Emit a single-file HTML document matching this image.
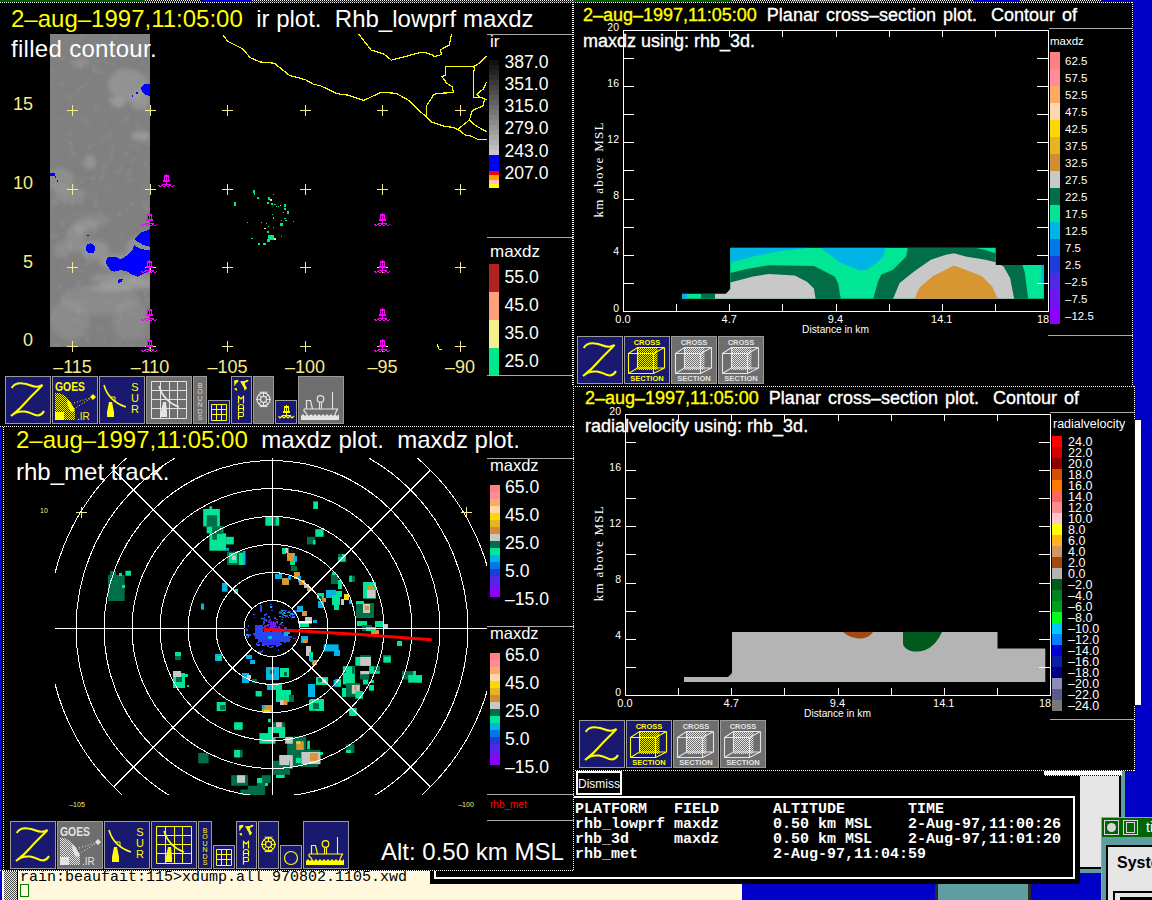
<!DOCTYPE html>
<html><head><meta charset="utf-8"><style>
html,body{margin:0;padding:0;background:#000;overflow:hidden;width:1152px;height:900px}
svg{display:block} text{white-space:pre}
</style></head><body>
<svg width="1152" height="900" viewBox="0 0 1152 900" shape-rendering="crispEdges">
<rect x="0" y="0" width="1152" height="900" fill="#000" />
<rect x="1133" y="0" width="19" height="386" fill="#0000c8" />
<rect x="1134" y="386" width="18" height="400" fill="#0000c8" />
<rect x="0" y="0" width="145" height="2" fill="#006400" />
<rect x="201" y="0" width="51" height="2" fill="#0000e0" />
<rect x="573" y="0" width="159" height="2" fill="#006400" />
<rect x="792" y="0" width="90" height="2" fill="#006400" />
<rect x="974" y="0" width="46" height="2" fill="#0000e0" />
<rect x="1101" y="0" width="51" height="2" fill="#0000c8" />
<line x1="145" y1="0.5" x2="201" y2="0.5" stroke="#fff" stroke-width="1" stroke-dasharray="1 1"/>
<line x1="146" y1="1.5" x2="201" y2="1.5" stroke="#888" stroke-width="1" stroke-dasharray="1 1"/>
<line x1="252" y1="0.5" x2="573" y2="0.5" stroke="#fff" stroke-width="1" stroke-dasharray="1 1"/>
<line x1="253" y1="1.5" x2="573" y2="1.5" stroke="#888" stroke-width="1" stroke-dasharray="1 1"/>
<line x1="732" y1="0.5" x2="974" y2="0.5" stroke="#fff" stroke-width="1" stroke-dasharray="1 1"/>
<line x1="733" y1="1.5" x2="974" y2="1.5" stroke="#888" stroke-width="1" stroke-dasharray="1 1"/>
<line x1="1020" y1="0.5" x2="1101" y2="0.5" stroke="#fff" stroke-width="1" stroke-dasharray="1 1"/>
<line x1="1021" y1="1.5" x2="1101" y2="1.5" stroke="#888" stroke-width="1" stroke-dasharray="1 1"/>
<rect x="1080" y="771" width="72" height="129" fill="#0000c8" />
<rect x="742" y="884" width="410" height="16" fill="#0000c8" />
<rect x="935" y="884" width="3" height="16" fill="#2a2a2a" />
<rect x="938" y="884" width="90" height="16" fill="#5f9ea0" />
<rect x="1028" y="884" width="3" height="16" fill="#2a2a2a" />
<rect x="1080" y="775" width="39" height="92" fill="#e6e6e6" />
<rect x="1119" y="771" width="2" height="98" fill="#000" />
<rect x="1121" y="771" width="4" height="46" fill="#5f9ea0" />
<rect x="1080" y="867" width="41" height="2" fill="#000" />
<rect x="1080" y="869" width="22" height="4" fill="#5f9ea0" />
<rect x="1101" y="817" width="51" height="83" fill="#a0a0a0" />
<rect x="1102" y="818" width="50" height="19" fill="#006400" />
<rect x="1104.5" y="820.5" width="14" height="14" fill="none" stroke="#d8d8d8" stroke-width="1"/>
<circle cx="1111.5" cy="827.5" r="4.5" fill="#d8d8d8" shape-rendering="auto"/>
<rect x="1123.5" y="820.5" width="14" height="14" fill="none" stroke="#d8d8d8" stroke-width="1"/>
<rect x="1126" y="822" width="8" height="10" fill="none" stroke="#d8d8d8" stroke-width="1"/>
<text x="1146" y="832" font-family="Liberation Sans" font-size="14" fill="#ffffff" text-anchor="start" >ti</text>
<rect x="1102" y="837" width="50" height="63" fill="#5f9ea0" />
<rect x="1106" y="845" width="46" height="55" fill="#000" />
<rect x="1108" y="847" width="44" height="53" fill="#e6e6e6" />
<text x="1117" y="868" font-family="Liberation Sans" font-size="16" fill="#000" text-anchor="start" font-weight="bold">Syste</text>
<rect x="1113" y="891" width="39" height="9" fill="#000" />
<rect x="1115" y="893" width="37" height="7" fill="#e6e6e6" />
<rect x="1120" y="897" width="32" height="3" fill="#000" />
<rect x="0" y="871" width="430" height="29" fill="#fff8dc" />
<rect x="430" y="884" width="312" height="16" fill="#fff8dc" />
<defs><pattern id="chkterm" width="2" height="2" patternUnits="userSpaceOnUse"><rect width="2" height="2" fill="#f0f0f0"/><rect width="1" height="1" fill="#404040"/><rect x="1" y="1" width="1" height="1" fill="#404040"/></pattern></defs>
<rect x="4" y="871" width="13" height="29" fill="url(#chkterm)" />
<rect x="17" y="871" width="1" height="29" fill="#000" />
<rect x="0" y="871" width="2" height="29" fill="#0000e0" />
<line x1="2.5" y1="871" x2="2.5" y2="900" stroke="#fff" stroke-width="1" stroke-dasharray="1 1"/>
<text x="20" y="880.5" font-family="Liberation Mono" font-size="15" fill="#000">rain:beaufait:115&gt;xdump.all 970802.1105.xwd</text>
<rect x="20.5" y="884.5" width="8" height="12" fill="none" stroke="#008000" stroke-width="1"/>
<rect x="430" y="771" width="650" height="113" fill="#000" />
<line x1="573.5" y1="771" x2="573.5" y2="871" stroke="#fff" stroke-width="1" stroke-dasharray="1 1"/>
<rect x="577" y="772" width="44" height="22" fill="none" stroke="#fff" stroke-width="2"/>
<text x="599" y="788" font-family="Liberation Sans" font-size="12" fill="#fff" text-anchor="middle" >Dismiss</text>
<rect x="435" y="797" width="639" height="81" fill="none" stroke="#fff" stroke-width="2"/>
<text x="575" y="812.5" font-family="Liberation Mono" font-size="15" font-weight="bold" fill="#fff">PLATFORM   FIELD      ALTITUDE       TIME</text>
<text x="575" y="827.6" font-family="Liberation Mono" font-size="15" font-weight="bold" fill="#fff">rhb_lowprf maxdz      0.50 km MSL    2-Aug-97,11:00:26</text>
<text x="575" y="842.7" font-family="Liberation Mono" font-size="15" font-weight="bold" fill="#fff">rhb_3d     maxdz      0.50 km MSL    2-Aug-97,11:01:20</text>
<text x="575" y="857.8" font-family="Liberation Mono" font-size="15" font-weight="bold" fill="#fff">rhb_met               2-Aug-97,11:04:59</text>
<rect x="1044" y="771" width="78" height="5" fill="#ffffff" />
<line x1="1044" y1="775.5" x2="1122" y2="775.5" stroke="#000" stroke-width="1" stroke-dasharray="1 1"/>
<line x1="0" y1="2.5" x2="573" y2="2.5" stroke="#fff" stroke-width="1" stroke-dasharray="1 1"/>
<line x1="573.5" y1="2" x2="573.5" y2="427" stroke="#fff" stroke-width="1" stroke-dasharray="1 1"/>
<line x1="0" y1="426.5" x2="573" y2="426.5" stroke="#fff" stroke-width="1" stroke-dasharray="1 1"/>
<rect x="50" y="34" width="100" height="313" fill="#808080" />
<defs><filter id="blur2" x="-20%" y="-20%" width="140%" height="140%"><feGaussianBlur stdDeviation="2.2"/></filter><filter id="noise" x="0" y="0" width="100%" height="100%"><feTurbulence type="fractalNoise" baseFrequency="0.12" numOctaves="3" seed="7"/><feColorMatrix type="matrix" values="0 0 0 0 1  0 0 0 0 1  0 0 0 0 1  2.2 0 0 0 -1.25"/></filter><clipPath id="satclip"><rect x="50" y="34" width="100" height="313"/></clipPath></defs>
<g clip-path="url(#satclip)" shape-rendering="auto">
<rect x="50" y="34" width="100" height="313" filter="url(#noise)" opacity="0.12"/>
<g filter="url(#blur2)" fill="#a8a8a8">
<ellipse cx="128" cy="85" rx="20" ry="16" opacity="0.45"/>
<ellipse cx="140" cy="100" rx="10" ry="10" opacity="0.5"/>
<ellipse cx="118" cy="102" rx="8" ry="5" opacity="0.6"/>
<ellipse cx="141" cy="136" rx="10" ry="5" opacity="0.6"/>
<ellipse cx="90" cy="162" rx="6" ry="7" opacity="0.5"/>
<ellipse cx="60" cy="180" rx="14" ry="12" opacity="0.35"/>
<ellipse cx="70" cy="195" rx="16" ry="8" opacity="0.3"/>
<ellipse cx="140" cy="250" rx="14" ry="14" opacity="0.45"/>
<ellipse cx="120" cy="262" rx="20" ry="8" opacity="0.5"/>
<ellipse cx="115" cy="278" rx="25" ry="5" opacity="0.45"/>
<ellipse cx="75" cy="240" rx="10" ry="12" opacity="0.35"/>
<ellipse cx="100" cy="300" rx="40" ry="15" opacity="0.25"/>
<ellipse cx="70" cy="320" rx="20" ry="20" opacity="0.25"/>
<ellipse cx="130" cy="320" rx="18" ry="20" opacity="0.2"/>
<ellipse cx="80" cy="62" rx="10" ry="5" opacity="0.3"/>
<ellipse cx="95" cy="220" rx="15" ry="6" opacity="0.25"/>
<ellipse cx="62" cy="250" rx="8" ry="8" opacity="0.3"/>
<ellipse cx="95" cy="250" rx="14" ry="10" opacity="0.45"/>
<ellipse cx="128" cy="285" rx="28" ry="5" opacity="0.5"/>
<ellipse cx="110" cy="288" rx="22" ry="4" opacity="0.4"/>
<ellipse cx="85" cy="226" rx="14" ry="6" opacity="0.4"/>
<ellipse cx="140" cy="280" rx="12" ry="6" opacity="0.5"/>
<ellipse cx="80" cy="230" rx="6" ry="5" opacity="0.4"/>
</g></g>
<polygon points="141.0,88.0 144.0,84.0 150.0,84.0 150.0,96.0 146.0,95.0 142.0,92.0" fill="#0000ff" stroke="none" stroke-width="1.2" />
<rect x="136" y="92" width="2" height="2" fill="#0000ff" />
<rect x="132" y="95" width="1" height="2" fill="#0000ff" />
<rect x="50" y="173" width="5" height="3" fill="#0000ff" />
<rect x="55" y="176" width="1" height="2" fill="#0000ff" />
<rect x="57" y="180" width="1" height="2" fill="#0000ff" />
<polygon points="85.5,248.0 87.5,244.0 91.0,243.3 94.0,245.0 95.5,249.0 94.0,252.5 88.0,252.5 86.0,251.0" fill="#0000ff" stroke="none" stroke-width="1.2" />
<polygon points="134.7,238.3 141.3,232.5 150.0,229.2 150.0,246.7 143.0,245.0 136.3,240.8" fill="#0000ff" stroke="none" stroke-width="1.2" />
<polygon points="105.5,261.7 108.0,257.5 114.7,256.7 121.3,259.2 126.3,255.8 133.0,250.0 133.8,245.0 138.8,248.3 146.3,250.0 150.0,250.0 150.0,270.0 144.7,273.3 138.0,276.7 131.3,274.2 128.0,271.7 121.3,270.0 114.7,271.7 111.3,270.8 108.0,266.7" fill="#0000ff" stroke="none" stroke-width="1.2" />
<polygon points="117.5,281.0 120.0,278.5 123.0,278.5 122.0,282.0 118.0,283.0" fill="#0000ff" stroke="none" stroke-width="1.2" />
<rect x="87" y="234.5" width="2" height="1.5" fill="#0000ff" />
<g clip-path="url(#mapclip)">
<polyline points="222.6,34.5 227.6,41.3 242.7,48.9 250.3,57.7 260.4,62.0 274.2,63.2 289.3,75.3 305.7,79.8 313.2,84.1 320.8,85.9 337.1,93.7 347.2,95.0 363.6,100.5 381.2,92.2 396.3,93.4 408.9,100.5 419.0,110.6 426.5,116.9 431.5,121.9 444.1,126.2 453.0,127.4 459.2,130.2 465.5,135.2 471.1,136.1 477.8,139.4 487.0,139.4" fill="none" stroke="#ff0" stroke-width="1.2" />
<polyline points="358.5,33.8 371.1,50.1 383.7,53.9 391.3,60.2 421.5,52.2 425.6,52.8 432.2,55.0 433.9,56.7 440.0,55.0 441.7,53.9 440.0,50.0 449.2,45.1 451.7,33.8" fill="none" stroke="#ff0" stroke-width="1.2" />
<polyline points="426.1,116.7 426.7,105.6 433.9,94.4 439.4,93.3 448.9,92.8 453.3,92.2 452.2,86.7 446.7,83.3 442.2,76.7 445.6,75.0 445.6,66.4 473.9,66.4 474.4,70.0 473.6,71.1 473.6,97.8 481.7,97.8 485.0,99.4 487.0,99.4" fill="none" stroke="#ff0" stroke-width="1.2" />
<polyline points="473.9,66.4 480.0,62.8 486.7,56.1" fill="none" stroke="#ff0" stroke-width="1.2" />
<polyline points="486.7,81.7 483.3,88.9 476.7,94.4 478.9,96.7 484.4,98.9" fill="none" stroke="#ff0" stroke-width="1.2" />
<polyline points="484.4,98.9 483.3,105.6 472.2,110.6 469.4,120.0 458.3,128.9" fill="none" stroke="#ff0" stroke-width="1.2" />
<polyline points="469.4,120.0 475.6,125.6 486.7,131.7" fill="none" stroke="#ff0" stroke-width="1.2" />
</g>
<defs><clipPath id="mapclip"><rect x="0" y="34" width="487" height="320"/></clipPath></defs>
<polyline points="437.0,344.0 439.0,349.0 442.0,350.0" fill="none" stroke="#ffff00" stroke-width="1" />
<rect x="252.5" y="190" width="2" height="3" fill="#00e88c" />
<rect x="253.5" y="192" width="1" height="3" fill="#00e88c" />
<rect x="233.5" y="201.5" width="2" height="4" fill="#00e88c" />
<rect x="257" y="197" width="2" height="2" fill="#00e88c" />
<rect x="268" y="197" width="2" height="3" fill="#00e88c" />
<rect x="269.5" y="199" width="2" height="2" fill="#f0e68c" />
<rect x="272.5" y="194" width="1" height="1" fill="#00e88c" />
<rect x="267" y="202" width="2" height="2" fill="#00e88c" />
<rect x="271" y="203" width="2" height="2" fill="#00e88c" />
<rect x="273.5" y="204" width="2" height="1" fill="#00e88c" />
<rect x="276" y="206" width="1" height="1" fill="#00e88c" />
<rect x="278" y="206" width="1" height="1" fill="#00e88c" />
<rect x="280" y="205" width="1" height="1" fill="#f0e68c" />
<rect x="284" y="203.5" width="2" height="3" fill="#00e88c" />
<rect x="283.5" y="208" width="2" height="2" fill="#00e88c" />
<rect x="286.5" y="211" width="2" height="3" fill="#00e88c" />
<rect x="283" y="212" width="1" height="1" fill="#00e88c" />
<rect x="272" y="213.5" width="1" height="1" fill="#00e88c" />
<rect x="273" y="216.5" width="1" height="2" fill="#00e88c" />
<rect x="283.5" y="218" width="2" height="1" fill="#00e88c" />
<rect x="285" y="220" width="2" height="1" fill="#00e88c" />
<rect x="281" y="220" width="1" height="1" fill="#00e88c" />
<rect x="292.5" y="221" width="1" height="1" fill="#00e88c" />
<rect x="246.5" y="221.5" width="1" height="1" fill="#00e88c" />
<rect x="261" y="222" width="1" height="1" fill="#00e88c" />
<rect x="266" y="223" width="1" height="1" fill="#00e88c" />
<rect x="279.5" y="223" width="3" height="3" fill="#00e88c" />
<rect x="268" y="226" width="1" height="1" fill="#00e88c" />
<rect x="273" y="227" width="1" height="1" fill="#00e88c" />
<rect x="264" y="228" width="2" height="1" fill="#f0e68c" />
<rect x="266.5" y="231" width="2" height="2" fill="#00e88c" />
<rect x="268" y="235" width="6" height="5" fill="#00e88c" />
<rect x="266.5" y="238.5" width="3" height="3" fill="#00e88c" />
<rect x="273.5" y="237.5" width="2" height="2" fill="#f0e68c" />
<rect x="251" y="238" width="2" height="1" fill="#00e88c" />
<rect x="281" y="236" width="1" height="1" fill="#00e88c" />
<rect x="258" y="242.5" width="2" height="2" fill="#00e88c" />
<rect x="262.5" y="243" width="3" height="2" fill="#00e88c" />
<line x1="67.0" y1="110.5" x2="78.0" y2="110.5" stroke="#f5eb8c" stroke-width="1" />
<line x1="72.5" y1="105.0" x2="72.5" y2="116.0" stroke="#f5eb8c" stroke-width="1" />
<line x1="67.0" y1="189" x2="78.0" y2="189" stroke="#f5eb8c" stroke-width="1" />
<line x1="72.5" y1="183.5" x2="72.5" y2="194.5" stroke="#f5eb8c" stroke-width="1" />
<line x1="67.0" y1="267.5" x2="78.0" y2="267.5" stroke="#f5eb8c" stroke-width="1" />
<line x1="72.5" y1="262.0" x2="72.5" y2="273.0" stroke="#f5eb8c" stroke-width="1" />
<line x1="67.0" y1="346.5" x2="78.0" y2="346.5" stroke="#f5eb8c" stroke-width="1" />
<line x1="72.5" y1="341.0" x2="72.5" y2="352.0" stroke="#f5eb8c" stroke-width="1" />
<line x1="144.5" y1="110.5" x2="155.5" y2="110.5" stroke="#f5eb8c" stroke-width="1" />
<line x1="150" y1="105.0" x2="150" y2="116.0" stroke="#f5eb8c" stroke-width="1" />
<line x1="144.5" y1="189" x2="155.5" y2="189" stroke="#f5eb8c" stroke-width="1" />
<line x1="150" y1="183.5" x2="150" y2="194.5" stroke="#f5eb8c" stroke-width="1" />
<line x1="144.5" y1="267.5" x2="155.5" y2="267.5" stroke="#f5eb8c" stroke-width="1" />
<line x1="150" y1="262.0" x2="150" y2="273.0" stroke="#f5eb8c" stroke-width="1" />
<line x1="144.5" y1="346.5" x2="155.5" y2="346.5" stroke="#f5eb8c" stroke-width="1" />
<line x1="150" y1="341.0" x2="150" y2="352.0" stroke="#f5eb8c" stroke-width="1" />
<line x1="222.0" y1="110.5" x2="233.0" y2="110.5" stroke="#f5eb8c" stroke-width="1" />
<line x1="227.5" y1="105.0" x2="227.5" y2="116.0" stroke="#f5eb8c" stroke-width="1" />
<line x1="222.0" y1="189" x2="233.0" y2="189" stroke="#f5eb8c" stroke-width="1" />
<line x1="227.5" y1="183.5" x2="227.5" y2="194.5" stroke="#f5eb8c" stroke-width="1" />
<line x1="222.0" y1="267.5" x2="233.0" y2="267.5" stroke="#f5eb8c" stroke-width="1" />
<line x1="227.5" y1="262.0" x2="227.5" y2="273.0" stroke="#f5eb8c" stroke-width="1" />
<line x1="222.0" y1="346.5" x2="233.0" y2="346.5" stroke="#f5eb8c" stroke-width="1" />
<line x1="227.5" y1="341.0" x2="227.5" y2="352.0" stroke="#f5eb8c" stroke-width="1" />
<line x1="299.5" y1="110.5" x2="310.5" y2="110.5" stroke="#f5eb8c" stroke-width="1" />
<line x1="305" y1="105.0" x2="305" y2="116.0" stroke="#f5eb8c" stroke-width="1" />
<line x1="299.5" y1="189" x2="310.5" y2="189" stroke="#f5eb8c" stroke-width="1" />
<line x1="305" y1="183.5" x2="305" y2="194.5" stroke="#f5eb8c" stroke-width="1" />
<line x1="299.5" y1="267.5" x2="310.5" y2="267.5" stroke="#f5eb8c" stroke-width="1" />
<line x1="305" y1="262.0" x2="305" y2="273.0" stroke="#f5eb8c" stroke-width="1" />
<line x1="299.5" y1="346.5" x2="310.5" y2="346.5" stroke="#f5eb8c" stroke-width="1" />
<line x1="305" y1="341.0" x2="305" y2="352.0" stroke="#f5eb8c" stroke-width="1" />
<line x1="377.0" y1="110.5" x2="388.0" y2="110.5" stroke="#f5eb8c" stroke-width="1" />
<line x1="382.5" y1="105.0" x2="382.5" y2="116.0" stroke="#f5eb8c" stroke-width="1" />
<line x1="377.0" y1="189" x2="388.0" y2="189" stroke="#f5eb8c" stroke-width="1" />
<line x1="382.5" y1="183.5" x2="382.5" y2="194.5" stroke="#f5eb8c" stroke-width="1" />
<line x1="377.0" y1="267.5" x2="388.0" y2="267.5" stroke="#f5eb8c" stroke-width="1" />
<line x1="382.5" y1="262.0" x2="382.5" y2="273.0" stroke="#f5eb8c" stroke-width="1" />
<line x1="377.0" y1="346.5" x2="388.0" y2="346.5" stroke="#f5eb8c" stroke-width="1" />
<line x1="382.5" y1="341.0" x2="382.5" y2="352.0" stroke="#f5eb8c" stroke-width="1" />
<line x1="454.5" y1="110.5" x2="465.5" y2="110.5" stroke="#f5eb8c" stroke-width="1" />
<line x1="460" y1="105.0" x2="460" y2="116.0" stroke="#f5eb8c" stroke-width="1" />
<line x1="454.5" y1="189" x2="465.5" y2="189" stroke="#f5eb8c" stroke-width="1" />
<line x1="460" y1="183.5" x2="460" y2="194.5" stroke="#f5eb8c" stroke-width="1" />
<line x1="454.5" y1="267.5" x2="465.5" y2="267.5" stroke="#f5eb8c" stroke-width="1" />
<line x1="460" y1="262.0" x2="460" y2="273.0" stroke="#f5eb8c" stroke-width="1" />
<line x1="454.5" y1="346.5" x2="465.5" y2="346.5" stroke="#f5eb8c" stroke-width="1" />
<line x1="460" y1="341.0" x2="460" y2="352.0" stroke="#f5eb8c" stroke-width="1" />
<g transform="translate(158,174)" fill="#ff00ff" stroke="none"><rect x="8" y="0" width="1" height="1"/><rect x="6" y="1" width="5" height="5"/><rect x="7" y="3" width="1" height="3" fill="#000"/><rect x="9" y="3" width="1" height="3" fill="#000"/><rect x="5" y="6" width="7" height="2"/><rect x="8" y="8" width="1" height="2"/><rect x="4" y="10" width="9" height="1"/><polyline points="0.5,11 2,13 4,11 6,13 8,11 10,13 12,11 14,13 16,11" fill="none" stroke="#ff00ff" stroke-width="1.2"/></g>
<g transform="translate(141,213)" fill="#ff00ff" stroke="none"><rect x="8" y="0" width="1" height="1"/><rect x="6" y="1" width="5" height="5"/><rect x="7" y="3" width="1" height="3" fill="#000"/><rect x="9" y="3" width="1" height="3" fill="#000"/><rect x="5" y="6" width="7" height="2"/><rect x="8" y="8" width="1" height="2"/><rect x="4" y="10" width="9" height="1"/><polyline points="0.5,11 2,13 4,11 6,13 8,11 10,13 12,11 14,13 16,11" fill="none" stroke="#ff00ff" stroke-width="1.2"/></g>
<g transform="translate(141,260)" fill="#ff00ff" stroke="none"><rect x="8" y="0" width="1" height="1"/><rect x="6" y="1" width="5" height="5"/><rect x="7" y="3" width="1" height="3" fill="#000"/><rect x="9" y="3" width="1" height="3" fill="#000"/><rect x="5" y="6" width="7" height="2"/><rect x="8" y="8" width="1" height="2"/><rect x="4" y="10" width="9" height="1"/><polyline points="0.5,11 2,13 4,11 6,13 8,11 10,13 12,11 14,13 16,11" fill="none" stroke="#ff00ff" stroke-width="1.2"/></g>
<g transform="translate(141,308)" fill="#ff00ff" stroke="none"><rect x="8" y="0" width="1" height="1"/><rect x="6" y="1" width="5" height="5"/><rect x="7" y="3" width="1" height="3" fill="#000"/><rect x="9" y="3" width="1" height="3" fill="#000"/><rect x="5" y="6" width="7" height="2"/><rect x="8" y="8" width="1" height="2"/><rect x="4" y="10" width="9" height="1"/><polyline points="0.5,11 2,13 4,11 6,13 8,11 10,13 12,11 14,13 16,11" fill="none" stroke="#ff00ff" stroke-width="1.2"/></g>
<g transform="translate(141,339)" fill="#ff00ff" stroke="none"><rect x="8" y="0" width="1" height="1"/><rect x="6" y="1" width="5" height="5"/><rect x="7" y="3" width="1" height="3" fill="#000"/><rect x="9" y="3" width="1" height="3" fill="#000"/><rect x="5" y="6" width="7" height="2"/><rect x="8" y="8" width="1" height="2"/><rect x="4" y="10" width="9" height="1"/><polyline points="0.5,11 2,13 4,11 6,13 8,11 10,13 12,11 14,13 16,11" fill="none" stroke="#ff00ff" stroke-width="1.2"/></g>
<g transform="translate(374,213)" fill="#ff00ff" stroke="none"><rect x="8" y="0" width="1" height="1"/><rect x="6" y="1" width="5" height="5"/><rect x="7" y="3" width="1" height="3" fill="#000"/><rect x="9" y="3" width="1" height="3" fill="#000"/><rect x="5" y="6" width="7" height="2"/><rect x="8" y="8" width="1" height="2"/><rect x="4" y="10" width="9" height="1"/><polyline points="0.5,11 2,13 4,11 6,13 8,11 10,13 12,11 14,13 16,11" fill="none" stroke="#ff00ff" stroke-width="1.2"/></g>
<g transform="translate(374,260)" fill="#ff00ff" stroke="none"><rect x="8" y="0" width="1" height="1"/><rect x="6" y="1" width="5" height="5"/><rect x="7" y="3" width="1" height="3" fill="#000"/><rect x="9" y="3" width="1" height="3" fill="#000"/><rect x="5" y="6" width="7" height="2"/><rect x="8" y="8" width="1" height="2"/><rect x="4" y="10" width="9" height="1"/><polyline points="0.5,11 2,13 4,11 6,13 8,11 10,13 12,11 14,13 16,11" fill="none" stroke="#ff00ff" stroke-width="1.2"/></g>
<g transform="translate(374,308)" fill="#ff00ff" stroke="none"><rect x="8" y="0" width="1" height="1"/><rect x="6" y="1" width="5" height="5"/><rect x="7" y="3" width="1" height="3" fill="#000"/><rect x="9" y="3" width="1" height="3" fill="#000"/><rect x="5" y="6" width="7" height="2"/><rect x="8" y="8" width="1" height="2"/><rect x="4" y="10" width="9" height="1"/><polyline points="0.5,11 2,13 4,11 6,13 8,11 10,13 12,11 14,13 16,11" fill="none" stroke="#ff00ff" stroke-width="1.2"/></g>
<g transform="translate(374,339)" fill="#ff00ff" stroke="none"><rect x="8" y="0" width="1" height="1"/><rect x="6" y="1" width="5" height="5"/><rect x="7" y="3" width="1" height="3" fill="#000"/><rect x="9" y="3" width="1" height="3" fill="#000"/><rect x="5" y="6" width="7" height="2"/><rect x="8" y="8" width="1" height="2"/><rect x="4" y="10" width="9" height="1"/><polyline points="0.5,11 2,13 4,11 6,13 8,11 10,13 12,11 14,13 16,11" fill="none" stroke="#ff00ff" stroke-width="1.2"/></g>
<text x="33" y="110" font-family="Liberation Sans" font-size="18" fill="#f5eb8c" text-anchor="end" >15</text>
<text x="33" y="189" font-family="Liberation Sans" font-size="18" fill="#f5eb8c" text-anchor="end" >10</text>
<text x="33" y="267.5" font-family="Liberation Sans" font-size="18" fill="#f5eb8c" text-anchor="end" >5</text>
<text x="33" y="346" font-family="Liberation Sans" font-size="18" fill="#f5eb8c" text-anchor="end" >0</text>
<text x="72.5" y="372.5" font-family="Liberation Sans" font-size="18" fill="#f5eb8c" text-anchor="middle" >–115</text>
<text x="150" y="372.5" font-family="Liberation Sans" font-size="18" fill="#f5eb8c" text-anchor="middle" >–110</text>
<text x="227.5" y="372.5" font-family="Liberation Sans" font-size="18" fill="#f5eb8c" text-anchor="middle" >–105</text>
<text x="305" y="372.5" font-family="Liberation Sans" font-size="18" fill="#f5eb8c" text-anchor="middle" >–100</text>
<text x="382.5" y="372.5" font-family="Liberation Sans" font-size="18" fill="#f5eb8c" text-anchor="middle" >–95</text>
<text x="460" y="372.5" font-family="Liberation Sans" font-size="18" fill="#f5eb8c" text-anchor="middle" >–90</text>
<text x="11" y="27" font-family="Liberation Sans" font-size="24" fill="#fff"><tspan fill="#ffff00">2–aug–1997,11:05:00</tspan>  ir plot.  Rhb_lowprf maxdz</text>
<text x="11" y="57" font-family="Liberation Sans" font-size="24" fill="#fff" text-anchor="start" letter-spacing="0.3">filled contour.</text>
<line x1="487" y1="34.5" x2="573" y2="34.5" stroke="#a8a8a8" stroke-width="1" />
<text x="490" y="47" font-family="Liberation Sans" font-size="17" fill="#fff" text-anchor="start" >ir</text>
<rect x="489" y="60" width="10" height="5" fill="rgb(16,16,16)" />
<rect x="489" y="65" width="10" height="5" fill="rgb(26,26,26)" />
<rect x="489" y="70" width="10" height="5" fill="rgb(36,36,36)" />
<rect x="489" y="75" width="10" height="5" fill="rgb(46,46,46)" />
<rect x="489" y="80" width="10" height="5" fill="rgb(56,56,56)" />
<rect x="489" y="85" width="10" height="5" fill="rgb(67,67,67)" />
<rect x="489" y="90" width="10" height="5" fill="rgb(77,77,77)" />
<rect x="489" y="95" width="10" height="5" fill="rgb(87,87,87)" />
<rect x="489" y="100" width="10" height="5" fill="rgb(97,97,97)" />
<rect x="489" y="105" width="10" height="5" fill="rgb(108,108,108)" />
<rect x="489" y="110" width="10" height="5" fill="rgb(118,118,118)" />
<rect x="489" y="115" width="10" height="5" fill="rgb(128,128,128)" />
<rect x="489" y="120" width="10" height="5" fill="rgb(138,138,138)" />
<rect x="489" y="125" width="10" height="5" fill="rgb(148,148,148)" />
<rect x="489" y="130" width="10" height="5" fill="rgb(159,159,159)" />
<rect x="489" y="135" width="10" height="5" fill="rgb(169,169,169)" />
<rect x="489" y="140" width="10" height="5" fill="rgb(179,179,179)" />
<rect x="489" y="145" width="10" height="5" fill="rgb(189,189,189)" />
<rect x="489" y="150" width="10" height="5" fill="rgb(200,200,200)" />
<rect x="489" y="155" width="10" height="16" fill="#0000ff" />
<rect x="489" y="171" width="10" height="4" fill="#ff0000" />
<rect x="489" y="175" width="10" height="5" fill="#ffa000" />
<rect x="489" y="180" width="10" height="4" fill="#ffc0c0" />
<rect x="489" y="184" width="10" height="4" fill="#ffff00" />
<text x="504.5" y="67.8" font-family="Liberation Sans" font-size="17.6" fill="#fff" text-anchor="start" >387.0</text>
<text x="504.5" y="90.0" font-family="Liberation Sans" font-size="17.6" fill="#fff" text-anchor="start" >351.0</text>
<text x="504.5" y="112.2" font-family="Liberation Sans" font-size="17.6" fill="#fff" text-anchor="start" >315.0</text>
<text x="504.5" y="134.4" font-family="Liberation Sans" font-size="17.6" fill="#fff" text-anchor="start" >279.0</text>
<text x="504.5" y="156.60000000000002" font-family="Liberation Sans" font-size="17.6" fill="#fff" text-anchor="start" >243.0</text>
<text x="504.5" y="178.8" font-family="Liberation Sans" font-size="17.6" fill="#fff" text-anchor="start" >207.0</text>
<line x1="487" y1="237.5" x2="573" y2="237.5" stroke="#a8a8a8" stroke-width="1" />
<text x="490" y="257" font-family="Liberation Sans" font-size="17" fill="#fff" text-anchor="start" >maxdz</text>
<rect x="489" y="263.5" width="10" height="28" fill="#b22222" />
<rect x="489" y="291.5" width="10" height="28" fill="#ffa07a" />
<rect x="489" y="319.5" width="10" height="28" fill="#f5f08c" />
<rect x="489" y="347.5" width="10" height="28" fill="#00e88c" />
<text x="504.5" y="283.3" font-family="Liberation Sans" font-size="17.6" fill="#fff" text-anchor="start" >55.0</text>
<text x="504.5" y="311.3" font-family="Liberation Sans" font-size="17.6" fill="#fff" text-anchor="start" >45.0</text>
<text x="504.5" y="339.3" font-family="Liberation Sans" font-size="17.6" fill="#fff" text-anchor="start" >35.0</text>
<text x="504.5" y="367.3" font-family="Liberation Sans" font-size="17.6" fill="#fff" text-anchor="start" >25.0</text>
<line x1="487" y1="375.5" x2="573" y2="375.5" stroke="#a8a8a8" stroke-width="1" />
<rect x="5.5" y="376.5" width="45" height="47" fill="#191970" stroke="#9a9a9a" stroke-width="1"/>
<g transform="translate(5,376)" shape-rendering="auto">
<path d="M6.7,12 C9,8 14,7 18,7.5 C24,8 27,11 32,10.7 C35,10.5 36.5,9.5 37.5,9 C33,14 27,19 21,26 C16,32 10,37 6,40 C10,36 15,35 20,35.5 C26,36 28,39.5 33,39.5 C36,39 38,37 39,35" fill="none" stroke="#ffff00" stroke-width="2"/>
</g>
<rect x="52.5" y="376.5" width="45" height="47" fill="#191970" stroke="#9a9a9a" stroke-width="1"/>
<g transform="translate(52,376)" shape-rendering="auto">
<text x="3" y="15" font-family="Liberation Sans" font-size="13" font-weight="bold" fill="#ffff00" textLength="30" lengthAdjust="spacingAndGlyphs">GOES</text>
<defs><pattern id="chk52_376" width="2" height="2" patternUnits="userSpaceOnUse"><rect width="1" height="1" fill="#ffff00"/><rect x="1" y="1" width="1" height="1" fill="#ffff00"/></pattern></defs>
<path d="M3,17 L7,17 C14,19 20,25 23,36 L23,44 L3,44 Z" fill="url(#chk52_376)"/>
<path d="M15,24 C19,26 21,30 23,35 L19,36 C17,32 15,29 15,24 Z" fill="#ffff00"/>
<rect x="3" y="36" width="9" height="8" fill="#ffff00"/>
<path d="M22,27 L41,21 M22,33 L41,21" stroke="#ffff00" stroke-width="1" stroke-dasharray="1 2" fill="none"/>
<path d="M41,18 L44,21 L41,24 L38,21 Z" fill="#ffff00"/>
<text x="25" y="44" font-family="Liberation Sans" font-size="10" fill="#ffff00">.IR</text>
</g>
<rect x="99.5" y="376.5" width="45" height="47" fill="#191970" stroke="#9a9a9a" stroke-width="1"/>
<g transform="translate(99,376)" shape-rendering="auto">
<path d="M5,9 C8,20 15,27 27,31" fill="none" stroke="#ffff00" stroke-width="1.6"/>
<path d="M11,21 L16,21 L16,26" fill="none" stroke="#ffff00" stroke-width="1"/>
<path d="M10,26 L13,26 L15,36 L15,41 L8,41 L8,36 Z" fill="#ffff00"/>
<text x="36" y="15" font-family="Liberation Sans" font-size="11" fill="#ffff00" text-anchor="middle" font-weight="normal">S</text>
<text x="36" y="26" font-family="Liberation Sans" font-size="11" fill="#ffff00" text-anchor="middle" font-weight="normal">U</text>
<text x="36" y="37" font-family="Liberation Sans" font-size="11" fill="#ffff00" text-anchor="middle" font-weight="normal">R</text>
</g>
<rect x="146.5" y="376.5" width="45" height="47" fill="#6e6e6e" stroke="#9a9a9a" stroke-width="1"/>
<g transform="translate(146,376)" shape-rendering="auto">
<path d="M5.5,5.5 H40.5 V42.5 H5.5 Z M14.5,5.5 V42.5 M23.5,5.5 V42.5 M31.5,5.5 V42.5 M5.5,14.5 H40.5 M5.5,23.5 H40.5 M5.5,32.5 H40.5" fill="none" stroke="#e4e4e4" stroke-width="1"/>
<path d="M13,10 C16,20 22,27 33,31" fill="none" stroke="#e4e4e4" stroke-width="1.6"/>
<path d="M17,26 L20,26 L21,36 L21,41 L15,41 L15,36 Z" fill="#e4e4e4"/>
</g>
<rect x="193.5" y="376.5" width="13" height="47" fill="#6e6e6e" stroke="#9a9a9a" stroke-width="1"/>
<g transform="translate(193,376)" shape-rendering="auto">
<text x="7" y="12.0" font-family="Liberation Sans" font-size="7" fill="#dcdcdc" text-anchor="middle" font-weight="normal">B</text>
<text x="7" y="18.4" font-family="Liberation Sans" font-size="7" fill="#dcdcdc" text-anchor="middle" font-weight="normal">O</text>
<text x="7" y="24.8" font-family="Liberation Sans" font-size="7" fill="#dcdcdc" text-anchor="middle" font-weight="normal">U</text>
<text x="7" y="31.200000000000003" font-family="Liberation Sans" font-size="7" fill="#dcdcdc" text-anchor="middle" font-weight="normal">N</text>
<text x="7" y="37.6" font-family="Liberation Sans" font-size="7" fill="#dcdcdc" text-anchor="middle" font-weight="normal">D</text>
<text x="7" y="44.0" font-family="Liberation Sans" font-size="7" fill="#dcdcdc" text-anchor="middle" font-weight="normal">S</text>
</g>
<rect x="208.5" y="400.5" width="21" height="23" fill="#191970" stroke="#9a9a9a" stroke-width="1"/>
<g transform="translate(208,400)" shape-rendering="auto">
<path d="M3.5,4.5 H18.5 V20.5 H3.5 Z M8.5,4.5 V20.5 M13.5,4.5 V20.5 M3.5,9.5 H18.5 M3.5,14.5 H18.5" fill="none" stroke="#ffff00" stroke-width="1"/>
</g>
<rect x="231.5" y="376.5" width="20" height="47" fill="#191970" stroke="#9a9a9a" stroke-width="1"/>
<g transform="translate(231,376)" shape-rendering="auto">
<path d="M3.1,4.4 L7.1,3.8 L7.4,5.5 L5.1,7.5 L3.4,10.4 Z M9.1,5.2 L13.8,4.9 L16.1,3.8 L17.8,4.4 L16.1,6.1 L13.8,6.7 L14.3,9.6 L16.1,11.9 L13.8,14.8 L12.6,11.3 L11.5,9.6 L10.3,7.2 Z M3.1,12.5 L5.7,11.9 L6.2,14.8 L4.5,14.2 Z" fill="#ffff00"/>
<path d="M7.5,27.5 V20.5 L10,23 L12.5,20.5 V27.5 M7.5,35.5 V30.5 Q7.5,28.5 10,28.5 Q12.5,28.5 12.5,30.5 V35.5 M7.5,32.5 H12.5 M7.5,43.5 V36.5 H11.5 Q12.5,36.5 12.5,38 V39 Q12.5,40.5 11.5,40.5 H7.5" fill="none" stroke="#ffff00" stroke-width="1.2"/>
</g>
<rect x="253.5" y="376.5" width="20" height="47" fill="#6e6e6e" stroke="#9a9a9a" stroke-width="1"/>
<g transform="translate(253,376)" shape-rendering="auto">
<circle cx="10.5" cy="23.4" r="6.5" fill="none" stroke="#e4e4e4" stroke-width="1.2"/>
<circle cx="10.5" cy="23.4" r="3" fill="none" stroke="#e4e4e4" stroke-width="1.2"/>
<path d="M3.0,23.4 H7.5 M13.5,23.4 H18.0 M10.5,15.899999999999999 V20.4 M10.5,26.4 V30.9 M5.9,18.799999999999997 L8.4,21.299999999999997 M15.1,28.0 L12.6,25.5 M15.1,18.799999999999997 L12.6,21.299999999999997 M5.9,28.0 L8.4,25.5 M6.5,16.2 H14.5 M6.5,30.599999999999998 H14.5" stroke="#e4e4e4" stroke-width="1"/>
</g>
<rect x="275.5" y="400.5" width="21" height="23" fill="#191970" stroke="#9a9a9a" stroke-width="1"/>
<g transform="translate(278,405)" fill="#ffff00" stroke="none"><rect x="8" y="0" width="1" height="1"/><rect x="6" y="1" width="5" height="5"/><rect x="7" y="3" width="1" height="3" fill="#191970"/><rect x="9" y="3" width="1" height="3" fill="#191970"/><rect x="5" y="6" width="7" height="2"/><rect x="8" y="8" width="1" height="2"/><rect x="4" y="10" width="9" height="1"/><polyline points="0.5,11 2,13 4,11 6,13 8,11 10,13 12,11 14,13 16,11" fill="none" stroke="#ffff00" stroke-width="1.2" shape-rendering="auto"/></g>
<rect x="298.5" y="376.5" width="45" height="47" fill="#6e6e6e" stroke="#9a9a9a" stroke-width="1"/>
<g transform="translate(298,376)" shape-rendering="auto">
<path d="M6,33 H39.5 L37,38 M6,33 L6,35 L9,38" fill="none" stroke="#e4e4e4" stroke-width="1.2"/>
<path d="M8.5,33 V24.5 H12.5 L14.5,33" fill="none" stroke="#e4e4e4" stroke-width="1.2"/>
<circle cx="22.5" cy="23" r="3.3" fill="none" stroke="#e4e4e4" stroke-width="1.2"/>
<path d="M21.5,26.5 V33 M23.5,26.5 V33 M34.5,16 V33" stroke="#e4e4e4" stroke-width="1.1"/>
<path d="M3,40 L5,38 L7,40 L9,38 L11,40 L13,38 L15,40 L17,38 L19,40 L21,38 L23,40 L25,38 L27,40 L29,38 L31,40 L33,38 L35,40 L37,38 L39,40 L41,38 V44 H3 Z" fill="#e4e4e4"/>
</g>
<line x1="573" y1="2.5" x2="1133" y2="2.5" stroke="#fff" stroke-width="1" stroke-dasharray="1 1"/>
<line x1="572.5" y1="2" x2="572.5" y2="386" stroke="#fff" stroke-width="1" stroke-dasharray="1 1"/>
<line x1="1132.5" y1="2" x2="1132.5" y2="386" stroke="#fff" stroke-width="1" stroke-dasharray="1 1"/>
<text x="583" y="20.5" font-family="Liberation Sans" font-size="18" fill="#fff" stroke="#fff" stroke-width="0.35"><tspan fill="#ffff00" stroke="#ffff00">2–aug–1997,11:05:00</tspan>  <tspan word-spacing="2">Planar cross–section plot.  Contour of</tspan></text>
<defs><clipPath id="trclip"><polygon points="682,293.8 726,293.8 730.2,289 730.2,247.8 995.7,247.8 995.7,265 1043.9,265 1043.9,298.7 682,298.7"/></clipPath></defs>
<g clip-path="url(#trclip)" shape-rendering="auto">
<rect x="680" y="245" width="370" height="60" fill="#00e696" />
<polygon points="730.2,247.8 810.4,247.8 779.2,251.3 753.1,256.5 730.2,262.6" fill="#00b4e6" stroke="none" stroke-width="1.2" />
<polygon points="820.8,247.8 885.6,247.8 883.1,256.5 876.5,263.1 866.6,269.7 860.0,270.5 857.3,269.5 839.9,262.6 831.3,255.6" fill="#00b4e6" stroke="none" stroke-width="1.2" />
<polygon points="730.2,273.0 744.4,269.5 768.8,265.2 813.9,266.0 824.3,271.3 834.7,276.5 838.2,283.4 840.8,299.0 730.2,299.0" fill="#006e46" stroke="none" stroke-width="1.2" />
<polygon points="715.0,299.0 715.0,293.8 726.0,293.8 730.2,289.0 730.2,282.5 753.1,276.5 768.8,273.9 794.8,275.6 807.0,281.7 813.9,288.6 815.6,299.0" fill="#c8c8c8" stroke="none" stroke-width="1.2" />
<rect x="682" y="293.8" width="5" height="5" fill="#00b4e6" />
<rect x="701" y="293.8" width="14" height="5" fill="#006e46" />
<polygon points="907.8,247.8 974.6,247.8 985.4,249.9 995.7,253.2 995.7,265.0 1022.5,265.0 1024.9,273.0 1028.2,299.0 873.2,299.0 878.1,281.2 881.4,274.6 893.0,269.7 906.2,256.5" fill="#006e46" stroke="none" stroke-width="1.2" />
<polygon points="893.0,299.0 899.6,282.9 914.4,271.3 930.9,259.8 945.8,254.8 954.0,253.2 965.6,256.5 985.4,259.8 995.7,262.3 1003.5,266.4 1010.1,277.9 1014.2,299.0" fill="#c8c8c8" stroke="none" stroke-width="1.2" />
<polygon points="914.4,299.0 919.4,287.8 932.6,276.3 944.1,270.5 954.0,265.6 965.6,269.7 982.0,276.3 992.0,286.2 997.7,299.0" fill="#d79632" stroke="none" stroke-width="1.2" />
<rect x="1041.4" y="265" width="3" height="18" fill="#00b4e6" />
</g>
<rect x="623.5" y="30.5" width="425" height="281" fill="none" stroke="#fff" stroke-width="1"/>
<line x1="676.5" y1="304" x2="676.5" y2="311" stroke="#fff" stroke-width="1" />
<line x1="676.5" y1="30" x2="676.5" y2="37" stroke="#fff" stroke-width="1" />
<line x1="729.5" y1="304" x2="729.5" y2="311" stroke="#fff" stroke-width="1" />
<line x1="729.5" y1="30" x2="729.5" y2="37" stroke="#fff" stroke-width="1" />
<line x1="782.5" y1="304" x2="782.5" y2="311" stroke="#fff" stroke-width="1" />
<line x1="782.5" y1="30" x2="782.5" y2="37" stroke="#fff" stroke-width="1" />
<line x1="836.5" y1="304" x2="836.5" y2="311" stroke="#fff" stroke-width="1" />
<line x1="836.5" y1="30" x2="836.5" y2="37" stroke="#fff" stroke-width="1" />
<line x1="889.5" y1="304" x2="889.5" y2="311" stroke="#fff" stroke-width="1" />
<line x1="889.5" y1="30" x2="889.5" y2="37" stroke="#fff" stroke-width="1" />
<line x1="942.5" y1="304" x2="942.5" y2="311" stroke="#fff" stroke-width="1" />
<line x1="942.5" y1="30" x2="942.5" y2="37" stroke="#fff" stroke-width="1" />
<line x1="995.5" y1="304" x2="995.5" y2="311" stroke="#fff" stroke-width="1" />
<line x1="995.5" y1="30" x2="995.5" y2="37" stroke="#fff" stroke-width="1" />
<line x1="623" y1="283.5" x2="634" y2="283.5" stroke="#fff" stroke-width="1" />
<line x1="1037" y1="283.5" x2="1048" y2="283.5" stroke="#fff" stroke-width="1" />
<line x1="623" y1="255.5" x2="634" y2="255.5" stroke="#fff" stroke-width="1" />
<line x1="1037" y1="255.5" x2="1048" y2="255.5" stroke="#fff" stroke-width="1" />
<line x1="623" y1="227.5" x2="634" y2="227.5" stroke="#fff" stroke-width="1" />
<line x1="1037" y1="227.5" x2="1048" y2="227.5" stroke="#fff" stroke-width="1" />
<line x1="623" y1="199.5" x2="634" y2="199.5" stroke="#fff" stroke-width="1" />
<line x1="1037" y1="199.5" x2="1048" y2="199.5" stroke="#fff" stroke-width="1" />
<line x1="623" y1="170.5" x2="634" y2="170.5" stroke="#fff" stroke-width="1" />
<line x1="1037" y1="170.5" x2="1048" y2="170.5" stroke="#fff" stroke-width="1" />
<line x1="623" y1="142.5" x2="634" y2="142.5" stroke="#fff" stroke-width="1" />
<line x1="1037" y1="142.5" x2="1048" y2="142.5" stroke="#fff" stroke-width="1" />
<line x1="623" y1="114.5" x2="634" y2="114.5" stroke="#fff" stroke-width="1" />
<line x1="1037" y1="114.5" x2="1048" y2="114.5" stroke="#fff" stroke-width="1" />
<line x1="623" y1="86.5" x2="634" y2="86.5" stroke="#fff" stroke-width="1" />
<line x1="1037" y1="86.5" x2="1048" y2="86.5" stroke="#fff" stroke-width="1" />
<line x1="623" y1="58.5" x2="634" y2="58.5" stroke="#fff" stroke-width="1" />
<line x1="1037" y1="58.5" x2="1048" y2="58.5" stroke="#fff" stroke-width="1" />
<text x="619" y="311.5" font-family="Liberation Sans" font-size="10.5" fill="#fff" text-anchor="end" >0</text>
<text x="619" y="255.3" font-family="Liberation Sans" font-size="10.5" fill="#fff" text-anchor="end" >4</text>
<text x="619" y="199.1" font-family="Liberation Sans" font-size="10.5" fill="#fff" text-anchor="end" >8</text>
<text x="619" y="142.9" font-family="Liberation Sans" font-size="10.5" fill="#fff" text-anchor="end" >12</text>
<text x="619" y="86.69999999999999" font-family="Liberation Sans" font-size="10.5" fill="#fff" text-anchor="end" >16</text>
<text x="619" y="30.5" font-family="Liberation Sans" font-size="10.5" fill="#fff" text-anchor="end" >20</text>
<text x="623.0" y="323" font-family="Liberation Sans" font-size="11" fill="#fff" text-anchor="middle" >0.0</text>
<text x="729.25" y="323" font-family="Liberation Sans" font-size="11" fill="#fff" text-anchor="middle" >4.7</text>
<text x="835.5" y="323" font-family="Liberation Sans" font-size="11" fill="#fff" text-anchor="middle" >9.4</text>
<text x="941.75" y="323" font-family="Liberation Sans" font-size="11" fill="#fff" text-anchor="middle" >14.1</text>
<text x="1043" y="323" font-family="Liberation Sans" font-size="11" fill="#fff" text-anchor="middle" >18</text>
<text x="835.5" y="332.5" font-family="Liberation Sans" font-size="10.2" fill="#fff" text-anchor="middle" >Distance in km</text>
<text x="598" y="170" font-family="Liberation Serif" font-size="13" fill="#fff" text-anchor="middle" textLength="95" lengthAdjust="spacing" transform="rotate(-90 598 170)" dominant-baseline="central">km above MSL</text>
<text x="583" y="47.4" font-family="Liberation Sans" font-size="18" fill="#fff" stroke="#fff" stroke-width="0.35">maxdz using: rhb_3d.</text>
<line x1="1049" y1="28.5" x2="1133" y2="28.5" stroke="#a8a8a8" stroke-width="1" />
<text x="1050" y="45" font-family="Liberation Sans" font-size="11.5" fill="#fff" text-anchor="start" >maxdz</text>
<rect x="1050" y="52" width="10" height="17" fill="#ff8080" />
<text x="1065" y="64.5" font-family="Liberation Sans" font-size="11.5" fill="#fff" text-anchor="start" >62.5</text>
<rect x="1050" y="69" width="10" height="17" fill="#ff8c96" />
<text x="1065" y="81.5" font-family="Liberation Sans" font-size="11.5" fill="#fff" text-anchor="start" >57.5</text>
<rect x="1050" y="86" width="10" height="17" fill="#ffaa64" />
<text x="1065" y="98.5" font-family="Liberation Sans" font-size="11.5" fill="#fff" text-anchor="start" >52.5</text>
<rect x="1050" y="103" width="10" height="17" fill="#ffd7aa" />
<text x="1065" y="115.5" font-family="Liberation Sans" font-size="11.5" fill="#fff" text-anchor="start" >47.5</text>
<rect x="1050" y="120" width="10" height="17" fill="#ffd700" />
<text x="1065" y="132.5" font-family="Liberation Sans" font-size="11.5" fill="#fff" text-anchor="start" >42.5</text>
<rect x="1050" y="137" width="10" height="17" fill="#e6b41e" />
<text x="1065" y="149.5" font-family="Liberation Sans" font-size="11.5" fill="#fff" text-anchor="start" >37.5</text>
<rect x="1050" y="154" width="10" height="17" fill="#d28c32" />
<text x="1065" y="166.5" font-family="Liberation Sans" font-size="11.5" fill="#fff" text-anchor="start" >32.5</text>
<rect x="1050" y="171" width="10" height="17" fill="#c8c8c8" />
<text x="1065" y="183.5" font-family="Liberation Sans" font-size="11.5" fill="#fff" text-anchor="start" >27.5</text>
<rect x="1050" y="188" width="10" height="17" fill="#006e46" />
<text x="1065" y="200.5" font-family="Liberation Sans" font-size="11.5" fill="#fff" text-anchor="start" >22.5</text>
<rect x="1050" y="205" width="10" height="17" fill="#00e696" />
<text x="1065" y="217.5" font-family="Liberation Sans" font-size="11.5" fill="#fff" text-anchor="start" >17.5</text>
<rect x="1050" y="222" width="10" height="17" fill="#00b4e6" />
<text x="1065" y="234.5" font-family="Liberation Sans" font-size="11.5" fill="#fff" text-anchor="start" >12.5</text>
<rect x="1050" y="239" width="10" height="17" fill="#0078e6" />
<text x="1065" y="251.5" font-family="Liberation Sans" font-size="11.5" fill="#fff" text-anchor="start" >7.5</text>
<rect x="1050" y="256" width="10" height="17" fill="#1e3cdc" />
<text x="1065" y="268.5" font-family="Liberation Sans" font-size="11.5" fill="#fff" text-anchor="start" >2.5</text>
<rect x="1050" y="273" width="10" height="17" fill="#5028e6" />
<text x="1065" y="285.5" font-family="Liberation Sans" font-size="11.5" fill="#fff" text-anchor="start" >–2.5</text>
<rect x="1050" y="290" width="10" height="17" fill="#7014f0" />
<text x="1065" y="302.5" font-family="Liberation Sans" font-size="11.5" fill="#fff" text-anchor="start" >–7.5</text>
<rect x="1050" y="307" width="10" height="17" fill="#8c00ff" />
<text x="1065" y="319.5" font-family="Liberation Sans" font-size="11.5" fill="#fff" text-anchor="start" >–12.5</text>
<line x1="1048" y1="335.5" x2="1133" y2="335.5" stroke="#a8a8a8" stroke-width="1" />
<rect x="577.5" y="336.5" width="45" height="47" fill="#191970" stroke="#9a9a9a" stroke-width="1"/>
<g transform="translate(577,336)" shape-rendering="auto">
<path d="M6.7,12 C9,8 14,7 18,7.5 C24,8 27,11 32,10.7 C35,10.5 36.5,9.5 37.5,9 C33,14 27,19 21,26 C16,32 10,37 6,40 C10,36 15,35 20,35.5 C26,36 28,39.5 33,39.5 C36,39 38,37 39,35" fill="none" stroke="#ffff00" stroke-width="2"/>
</g>
<rect x="624.5" y="336.5" width="45" height="47" fill="#191970" stroke="#9a9a9a" stroke-width="1"/>
<g transform="translate(624,336)" shape-rendering="auto">
<text x="23.0" y="9" font-family="Liberation Sans" font-size="7.5" font-weight="bold" fill="#ffff00" text-anchor="middle">CROSS</text>
<text x="23.0" y="45" font-family="Liberation Sans" font-size="7.5" font-weight="bold" fill="#ffff00" text-anchor="middle">SECTION</text>
<defs><pattern id="cp624_336" width="2" height="2" patternUnits="userSpaceOnUse"><rect width="1" height="1" fill="#ffff00"/><rect x="1" y="1" width="1" height="1" fill="#ffff00"/></pattern></defs>
<rect x="13.5" y="12" width="20" height="22" fill="url(#cp624_336)"/>
<path d="M4.5,17.5 H29.5 V37.5 H4.5 Z M4.5,17.5 L13.5,11.5 H40.5 L29.5,17.5 M40.5,11.5 V32 L29.5,37.5 M13.5,11.5 V32 L4.5,37.5 M13.5,32 H40.5" fill="none" stroke="#ffff00" stroke-width="1.1"/>
</g>
<rect x="671.5" y="336.5" width="45" height="47" fill="#6e6e6e" stroke="#9a9a9a" stroke-width="1"/>
<g transform="translate(671,336)" shape-rendering="auto">
<text x="23.0" y="9" font-family="Liberation Sans" font-size="7.5" font-weight="bold" fill="#e4e4e4" text-anchor="middle">CROSS</text>
<text x="23.0" y="45" font-family="Liberation Sans" font-size="7.5" font-weight="bold" fill="#e4e4e4" text-anchor="middle">SECTION</text>
<defs><pattern id="cp671_336" width="2" height="2" patternUnits="userSpaceOnUse"><rect width="1" height="1" fill="#e4e4e4"/><rect x="1" y="1" width="1" height="1" fill="#e4e4e4"/></pattern></defs>
<rect x="13.5" y="12" width="20" height="22" fill="url(#cp671_336)"/>
<path d="M4.5,17.5 H29.5 V37.5 H4.5 Z M4.5,17.5 L13.5,11.5 H40.5 L29.5,17.5 M40.5,11.5 V32 L29.5,37.5 M13.5,11.5 V32 L4.5,37.5 M13.5,32 H40.5" fill="none" stroke="#e4e4e4" stroke-width="1.1"/>
</g>
<rect x="718.5" y="336.5" width="45" height="47" fill="#6e6e6e" stroke="#9a9a9a" stroke-width="1"/>
<g transform="translate(718,336)" shape-rendering="auto">
<text x="23.0" y="9" font-family="Liberation Sans" font-size="7.5" font-weight="bold" fill="#e4e4e4" text-anchor="middle">CROSS</text>
<text x="23.0" y="45" font-family="Liberation Sans" font-size="7.5" font-weight="bold" fill="#e4e4e4" text-anchor="middle">SECTION</text>
<defs><pattern id="cp718_336" width="2" height="2" patternUnits="userSpaceOnUse"><rect width="1" height="1" fill="#e4e4e4"/><rect x="1" y="1" width="1" height="1" fill="#e4e4e4"/></pattern></defs>
<rect x="13.5" y="12" width="20" height="22" fill="url(#cp718_336)"/>
<path d="M4.5,17.5 H29.5 V37.5 H4.5 Z M4.5,17.5 L13.5,11.5 H40.5 L29.5,17.5 M40.5,11.5 V32 L29.5,37.5 M13.5,11.5 V32 L4.5,37.5 M13.5,32 H40.5" fill="none" stroke="#e4e4e4" stroke-width="1.1"/>
</g>
<rect x="573" y="386" width="561" height="385" fill="#000" />
<line x1="573" y1="386.5" x2="1134" y2="386.5" stroke="#fff" stroke-width="1" stroke-dasharray="1 1"/>
<line x1="573.5" y1="386" x2="573.5" y2="771" stroke="#fff" stroke-width="1" stroke-dasharray="1 1"/>
<line x1="1134.5" y1="386" x2="1134.5" y2="771" stroke="#fff" stroke-width="1" stroke-dasharray="1 1"/>
<line x1="573" y1="770.5" x2="1134" y2="770.5" stroke="#fff" stroke-width="1" stroke-dasharray="1 1"/>
<rect x="1135" y="420" width="6" height="285" fill="#ffffff" />
<line x1="1134.5" y1="420" x2="1134.5" y2="705" stroke="#000" stroke-width="1" stroke-dasharray="1 1"/>
<text x="585" y="404.2" font-family="Liberation Sans" font-size="18" fill="#fff" stroke="#fff" stroke-width="0.35"><tspan fill="#ffff00" stroke="#ffff00">2–aug–1997,11:05:00</tspan>  <tspan word-spacing="2">Planar cross–section plot.  Contour of</tspan></text>
<polygon points="684,677 728,677 732,673 732,632 997.5,632 997.5,648.4 1045.3,648.4 1045.3,682 684,682" fill="#b4b4b4" shape-rendering="auto"/>
<path d="M843,632 H873 C871,635 868,637.5 862,638.5 C855,638.5 849,637 843,632 Z" fill="#a04a10" shape-rendering="auto"/>
<path d="M903,632 H942 C938,640 933,648 922,651 C912,653 905,650 903,644 Z" fill="#005a1e" shape-rendering="auto"/>
<rect x="625.5" y="414.5" width="425" height="281" fill="none" stroke="#fff" stroke-width="1"/>
<line x1="678.5" y1="688" x2="678.5" y2="695" stroke="#fff" stroke-width="1" />
<line x1="678.5" y1="414" x2="678.5" y2="421" stroke="#fff" stroke-width="1" />
<line x1="731.5" y1="688" x2="731.5" y2="695" stroke="#fff" stroke-width="1" />
<line x1="731.5" y1="414" x2="731.5" y2="421" stroke="#fff" stroke-width="1" />
<line x1="784.5" y1="688" x2="784.5" y2="695" stroke="#fff" stroke-width="1" />
<line x1="784.5" y1="414" x2="784.5" y2="421" stroke="#fff" stroke-width="1" />
<line x1="838.5" y1="688" x2="838.5" y2="695" stroke="#fff" stroke-width="1" />
<line x1="838.5" y1="414" x2="838.5" y2="421" stroke="#fff" stroke-width="1" />
<line x1="891.5" y1="688" x2="891.5" y2="695" stroke="#fff" stroke-width="1" />
<line x1="891.5" y1="414" x2="891.5" y2="421" stroke="#fff" stroke-width="1" />
<line x1="944.5" y1="688" x2="944.5" y2="695" stroke="#fff" stroke-width="1" />
<line x1="944.5" y1="414" x2="944.5" y2="421" stroke="#fff" stroke-width="1" />
<line x1="997.5" y1="688" x2="997.5" y2="695" stroke="#fff" stroke-width="1" />
<line x1="997.5" y1="414" x2="997.5" y2="421" stroke="#fff" stroke-width="1" />
<line x1="625" y1="667.5" x2="636" y2="667.5" stroke="#fff" stroke-width="1" />
<line x1="1039" y1="667.5" x2="1050" y2="667.5" stroke="#fff" stroke-width="1" />
<line x1="625" y1="639.5" x2="636" y2="639.5" stroke="#fff" stroke-width="1" />
<line x1="1039" y1="639.5" x2="1050" y2="639.5" stroke="#fff" stroke-width="1" />
<line x1="625" y1="611.5" x2="636" y2="611.5" stroke="#fff" stroke-width="1" />
<line x1="1039" y1="611.5" x2="1050" y2="611.5" stroke="#fff" stroke-width="1" />
<line x1="625" y1="583.5" x2="636" y2="583.5" stroke="#fff" stroke-width="1" />
<line x1="1039" y1="583.5" x2="1050" y2="583.5" stroke="#fff" stroke-width="1" />
<line x1="625" y1="554.5" x2="636" y2="554.5" stroke="#fff" stroke-width="1" />
<line x1="1039" y1="554.5" x2="1050" y2="554.5" stroke="#fff" stroke-width="1" />
<line x1="625" y1="526.5" x2="636" y2="526.5" stroke="#fff" stroke-width="1" />
<line x1="1039" y1="526.5" x2="1050" y2="526.5" stroke="#fff" stroke-width="1" />
<line x1="625" y1="498.5" x2="636" y2="498.5" stroke="#fff" stroke-width="1" />
<line x1="1039" y1="498.5" x2="1050" y2="498.5" stroke="#fff" stroke-width="1" />
<line x1="625" y1="470.5" x2="636" y2="470.5" stroke="#fff" stroke-width="1" />
<line x1="1039" y1="470.5" x2="1050" y2="470.5" stroke="#fff" stroke-width="1" />
<line x1="625" y1="442.5" x2="636" y2="442.5" stroke="#fff" stroke-width="1" />
<line x1="1039" y1="442.5" x2="1050" y2="442.5" stroke="#fff" stroke-width="1" />
<text x="621" y="695.5" font-family="Liberation Sans" font-size="10.5" fill="#fff" text-anchor="end" >0</text>
<text x="621" y="639.3" font-family="Liberation Sans" font-size="10.5" fill="#fff" text-anchor="end" >4</text>
<text x="621" y="583.1" font-family="Liberation Sans" font-size="10.5" fill="#fff" text-anchor="end" >8</text>
<text x="621" y="526.9" font-family="Liberation Sans" font-size="10.5" fill="#fff" text-anchor="end" >12</text>
<text x="621" y="470.7" font-family="Liberation Sans" font-size="10.5" fill="#fff" text-anchor="end" >16</text>
<text x="621" y="414.5" font-family="Liberation Sans" font-size="10.5" fill="#fff" text-anchor="end" >20</text>
<text x="625.0" y="707" font-family="Liberation Sans" font-size="11" fill="#fff" text-anchor="middle" >0.0</text>
<text x="731.25" y="707" font-family="Liberation Sans" font-size="11" fill="#fff" text-anchor="middle" >4.7</text>
<text x="837.5" y="707" font-family="Liberation Sans" font-size="11" fill="#fff" text-anchor="middle" >9.4</text>
<text x="943.75" y="707" font-family="Liberation Sans" font-size="11" fill="#fff" text-anchor="middle" >14.1</text>
<text x="1045" y="707" font-family="Liberation Sans" font-size="11" fill="#fff" text-anchor="middle" >18</text>
<text x="837.5" y="716.5" font-family="Liberation Sans" font-size="10.2" fill="#fff" text-anchor="middle" >Distance in km</text>
<text x="598.7" y="553.7" font-family="Liberation Serif" font-size="13" fill="#fff" text-anchor="middle" textLength="95" lengthAdjust="spacing" transform="rotate(-90 598.7 553.7)" dominant-baseline="central">km above MSL</text>
<text x="585" y="431.5" font-family="Liberation Sans" font-size="18" fill="#fff" stroke="#fff" stroke-width="0.35">radialvelocity using: rhb_3d.</text>
<line x1="1050" y1="412.5" x2="1134" y2="412.5" stroke="#a8a8a8" stroke-width="1" />
<text x="1053" y="428" font-family="Liberation Sans" font-size="12.5" fill="#fff" text-anchor="start" >radialvelocity</text>
<rect x="1052" y="436" width="10" height="11" fill="#ff0000" />
<text x="1068" y="446.0" font-family="Liberation Sans" font-size="12.5" fill="#fff" text-anchor="start" >24.0</text>
<rect x="1052" y="447" width="10" height="11" fill="#d20000" />
<text x="1068" y="457.0" font-family="Liberation Sans" font-size="12.5" fill="#fff" text-anchor="start" >22.0</text>
<rect x="1052" y="458" width="10" height="11" fill="#8c0000" />
<text x="1068" y="468.0" font-family="Liberation Sans" font-size="12.5" fill="#fff" text-anchor="start" >20.0</text>
<rect x="1052" y="469" width="10" height="11" fill="#d25000" />
<text x="1068" y="479.0" font-family="Liberation Sans" font-size="12.5" fill="#fff" text-anchor="start" >18.0</text>
<rect x="1052" y="480" width="10" height="11" fill="#ff7800" />
<text x="1068" y="490.0" font-family="Liberation Sans" font-size="12.5" fill="#fff" text-anchor="start" >16.0</text>
<rect x="1052" y="491" width="10" height="11" fill="#ff6464" />
<text x="1068" y="501.0" font-family="Liberation Sans" font-size="12.5" fill="#fff" text-anchor="start" >14.0</text>
<rect x="1052" y="502" width="10" height="11" fill="#ff8c8c" />
<text x="1068" y="512.0" font-family="Liberation Sans" font-size="12.5" fill="#fff" text-anchor="start" >12.0</text>
<rect x="1052" y="513" width="10" height="11" fill="#ffc8c8" />
<text x="1068" y="523.0" font-family="Liberation Sans" font-size="12.5" fill="#fff" text-anchor="start" >10.0</text>
<rect x="1052" y="524" width="10" height="11" fill="#ffff00" />
<text x="1068" y="534.0" font-family="Liberation Sans" font-size="12.5" fill="#fff" text-anchor="start" >8.0</text>
<rect x="1052" y="535" width="10" height="11" fill="#ffb41e" />
<text x="1068" y="545.0" font-family="Liberation Sans" font-size="12.5" fill="#fff" text-anchor="start" >6.0</text>
<rect x="1052" y="546" width="10" height="11" fill="#d29664" />
<text x="1068" y="556.0" font-family="Liberation Sans" font-size="12.5" fill="#fff" text-anchor="start" >4.0</text>
<rect x="1052" y="557" width="10" height="11" fill="#a04a10" />
<text x="1068" y="567.0" font-family="Liberation Sans" font-size="12.5" fill="#fff" text-anchor="start" >2.0</text>
<rect x="1052" y="568" width="10" height="11" fill="#b4b4b4" />
<text x="1068" y="578.0" font-family="Liberation Sans" font-size="12.5" fill="#fff" text-anchor="start" >0.0</text>
<rect x="1052" y="579" width="10" height="11" fill="#005a1e" />
<text x="1068" y="589.0" font-family="Liberation Sans" font-size="12.5" fill="#fff" text-anchor="start" >–2.0</text>
<rect x="1052" y="590" width="10" height="11" fill="#00821e" />
<text x="1068" y="600.0" font-family="Liberation Sans" font-size="12.5" fill="#fff" text-anchor="start" >–4.0</text>
<rect x="1052" y="601" width="10" height="11" fill="#00a01e" />
<text x="1068" y="611.0" font-family="Liberation Sans" font-size="12.5" fill="#fff" text-anchor="start" >–6.0</text>
<rect x="1052" y="612" width="10" height="11" fill="#00ff1e" />
<text x="1068" y="622.0" font-family="Liberation Sans" font-size="12.5" fill="#fff" text-anchor="start" >–8.0</text>
<rect x="1052" y="623" width="10" height="11" fill="#00c8ff" />
<text x="1068" y="633.0" font-family="Liberation Sans" font-size="12.5" fill="#fff" text-anchor="start" >–10.0</text>
<rect x="1052" y="634" width="10" height="11" fill="#0082ff" />
<text x="1068" y="644.0" font-family="Liberation Sans" font-size="12.5" fill="#fff" text-anchor="start" >–12.0</text>
<rect x="1052" y="645" width="10" height="11" fill="#0000d2" />
<text x="1068" y="655.0" font-family="Liberation Sans" font-size="12.5" fill="#fff" text-anchor="start" >–14.0</text>
<rect x="1052" y="656" width="10" height="11" fill="#0a1eaa" />
<text x="1068" y="666.0" font-family="Liberation Sans" font-size="12.5" fill="#fff" text-anchor="start" >–16.0</text>
<rect x="1052" y="667" width="10" height="11" fill="#000082" />
<text x="1068" y="677.0" font-family="Liberation Sans" font-size="12.5" fill="#fff" text-anchor="start" >–18.0</text>
<rect x="1052" y="678" width="10" height="11" fill="#8c8cb4" />
<text x="1068" y="688.0" font-family="Liberation Sans" font-size="12.5" fill="#fff" text-anchor="start" >–20.0</text>
<rect x="1052" y="689" width="10" height="11" fill="#5a5a8c" />
<text x="1068" y="699.0" font-family="Liberation Sans" font-size="12.5" fill="#fff" text-anchor="start" >–22.0</text>
<rect x="1052" y="700" width="10" height="11" fill="#787878" />
<text x="1068" y="710.0" font-family="Liberation Sans" font-size="12.5" fill="#fff" text-anchor="start" >–24.0</text>
<line x1="1050" y1="719.5" x2="1134" y2="719.5" stroke="#a8a8a8" stroke-width="1" />
<rect x="579.5" y="720.5" width="45" height="47" fill="#191970" stroke="#9a9a9a" stroke-width="1"/>
<g transform="translate(579,720)" shape-rendering="auto">
<path d="M6.7,12 C9,8 14,7 18,7.5 C24,8 27,11 32,10.7 C35,10.5 36.5,9.5 37.5,9 C33,14 27,19 21,26 C16,32 10,37 6,40 C10,36 15,35 20,35.5 C26,36 28,39.5 33,39.5 C36,39 38,37 39,35" fill="none" stroke="#ffff00" stroke-width="2"/>
</g>
<rect x="626.5" y="720.5" width="45" height="47" fill="#191970" stroke="#9a9a9a" stroke-width="1"/>
<g transform="translate(626,720)" shape-rendering="auto">
<text x="23.0" y="9" font-family="Liberation Sans" font-size="7.5" font-weight="bold" fill="#ffff00" text-anchor="middle">CROSS</text>
<text x="23.0" y="45" font-family="Liberation Sans" font-size="7.5" font-weight="bold" fill="#ffff00" text-anchor="middle">SECTION</text>
<defs><pattern id="cp626_720" width="2" height="2" patternUnits="userSpaceOnUse"><rect width="1" height="1" fill="#ffff00"/><rect x="1" y="1" width="1" height="1" fill="#ffff00"/></pattern></defs>
<rect x="13.5" y="12" width="20" height="22" fill="url(#cp626_720)"/>
<path d="M4.5,17.5 H29.5 V37.5 H4.5 Z M4.5,17.5 L13.5,11.5 H40.5 L29.5,17.5 M40.5,11.5 V32 L29.5,37.5 M13.5,11.5 V32 L4.5,37.5 M13.5,32 H40.5" fill="none" stroke="#ffff00" stroke-width="1.1"/>
</g>
<rect x="673.5" y="720.5" width="45" height="47" fill="#6e6e6e" stroke="#9a9a9a" stroke-width="1"/>
<g transform="translate(673,720)" shape-rendering="auto">
<text x="23.0" y="9" font-family="Liberation Sans" font-size="7.5" font-weight="bold" fill="#e4e4e4" text-anchor="middle">CROSS</text>
<text x="23.0" y="45" font-family="Liberation Sans" font-size="7.5" font-weight="bold" fill="#e4e4e4" text-anchor="middle">SECTION</text>
<defs><pattern id="cp673_720" width="2" height="2" patternUnits="userSpaceOnUse"><rect width="1" height="1" fill="#e4e4e4"/><rect x="1" y="1" width="1" height="1" fill="#e4e4e4"/></pattern></defs>
<rect x="13.5" y="12" width="20" height="22" fill="url(#cp673_720)"/>
<path d="M4.5,17.5 H29.5 V37.5 H4.5 Z M4.5,17.5 L13.5,11.5 H40.5 L29.5,17.5 M40.5,11.5 V32 L29.5,37.5 M13.5,11.5 V32 L4.5,37.5 M13.5,32 H40.5" fill="none" stroke="#e4e4e4" stroke-width="1.1"/>
</g>
<rect x="720.5" y="720.5" width="45" height="47" fill="#6e6e6e" stroke="#9a9a9a" stroke-width="1"/>
<g transform="translate(720,720)" shape-rendering="auto">
<text x="23.0" y="9" font-family="Liberation Sans" font-size="7.5" font-weight="bold" fill="#e4e4e4" text-anchor="middle">CROSS</text>
<text x="23.0" y="45" font-family="Liberation Sans" font-size="7.5" font-weight="bold" fill="#e4e4e4" text-anchor="middle">SECTION</text>
<defs><pattern id="cp720_720" width="2" height="2" patternUnits="userSpaceOnUse"><rect width="1" height="1" fill="#e4e4e4"/><rect x="1" y="1" width="1" height="1" fill="#e4e4e4"/></pattern></defs>
<rect x="13.5" y="12" width="20" height="22" fill="url(#cp720_720)"/>
<path d="M4.5,17.5 H29.5 V37.5 H4.5 Z M4.5,17.5 L13.5,11.5 H40.5 L29.5,17.5 M40.5,11.5 V32 L29.5,37.5 M13.5,11.5 V32 L4.5,37.5 M13.5,32 H40.5" fill="none" stroke="#e4e4e4" stroke-width="1.1"/>
</g>
<rect x="0" y="427" width="574" height="444" fill="#000" />
<rect x="0" y="427" width="2" height="444" fill="#0000e0" />
<line x1="3.5" y1="427" x2="3.5" y2="871" stroke="#fff" stroke-width="1" stroke-dasharray="1 1"/>
<line x1="573.5" y1="427" x2="573.5" y2="871" stroke="#fff" stroke-width="1" stroke-dasharray="1 1"/>
<line x1="0" y1="870.5" x2="573" y2="870.5" stroke="#fff" stroke-width="1" stroke-dasharray="1 1"/>
<defs><clipPath id="polclip"><rect x="55" y="458" width="432" height="337"/></clipPath></defs>
<g clip-path="url(#polclip)" shape-rendering="auto">
<rect x="209.4" y="506.3" width="2.8" height="9" fill="#00e696" />
<rect x="203.2" y="509" width="16.7" height="17.4" fill="#00e696" />
<rect x="206.7" y="526.4" width="16.6" height="7" fill="#00e696" />
<rect x="209.4" y="533.3" width="16.7" height="17.4" fill="#00e696" />
<rect x="226.1" y="536.8" width="7.7" height="7.6" fill="#00e696" />
<rect x="206.7" y="515.3" width="10.4" height="11.1" fill="#006e46" />
<rect x="212.2" y="526.4" width="10.4" height="7.6" fill="#006e46" />
<rect x="212.2" y="534" width="4.8" height="5.6" fill="#006e46" />
<rect x="226.1" y="547.9" width="2.8" height="2.8" fill="#00b4e6" />
<rect x="227" y="551.5" width="18" height="13.5" fill="#006e46" />
<rect x="229" y="553" width="8" height="10" fill="#00e696" />
<rect x="232" y="556" width="4" height="4" fill="#c8c8c8" />
<rect x="239" y="553" width="6" height="12" fill="#00e696" />
<rect x="243" y="551" width="2.5" height="14" fill="#00b4e6" />
<rect x="108" y="575" width="16.7" height="26" fill="#006e46" />
<rect x="110" y="571" width="6" height="5" fill="#006e46" />
<rect x="125.4" y="570.8" width="5.6" height="4.9" fill="#00e696" />
<rect x="119" y="573" width="3" height="3" fill="#00e696" />
<rect x="122" y="585" width="3" height="3" fill="#00e696" />
<rect x="222" y="583" width="5.5" height="8.7" fill="#00b4e6" />
<rect x="201" y="603.5" width="3" height="6.2" fill="#00b4e6" />
<rect x="234.4" y="588.9" width="3.6" height="4.9" fill="#00e696" />
<rect x="313.2" y="501.4" width="4.8" height="7.6" fill="#00e696" />
<rect x="265.3" y="516.7" width="13.9" height="9" fill="#00e696" />
<rect x="272" y="516.7" width="3.7" height="9" fill="#006e46" />
<rect x="315.3" y="529.2" width="8.3" height="7.6" fill="#00e696" />
<rect x="307" y="536.8" width="8.3" height="7.6" fill="#006e46" />
<rect x="313" y="540" width="2.5" height="4.5" fill="#00e696" />
<rect x="411" y="534" width="2" height="2" fill="#006e46" />
<rect x="338.2" y="554" width="7.6" height="7.8" fill="#00e696" />
<rect x="338" y="554" width="4" height="3" fill="#006e46" />
<rect x="282" y="548" width="4" height="6" fill="#00e696" />
<rect x="285.5" y="548" width="3" height="5" fill="#c8c8c8" />
<rect x="287" y="553" width="8" height="8" fill="#d79632" />
<rect x="294" y="556" width="3" height="6" fill="#00b4e6" />
<rect x="290" y="561" width="5" height="4" fill="#00e696" />
<rect x="291" y="566" width="6" height="5" fill="#006e46" />
<rect x="294" y="572" width="6" height="7" fill="#d79632" />
<rect x="298" y="576" width="3" height="6" fill="#00b4e6" />
<rect x="299" y="580" width="6" height="5" fill="#d79632" />
<rect x="304" y="584" width="5" height="4" fill="#c8c8c8" />
<rect x="307" y="587" width="4" height="4" fill="#d79632" />
<rect x="310" y="588" width="2" height="3" fill="#00b4e6" />
<rect x="275" y="574" width="7" height="5" fill="#00b4e6" />
<rect x="282" y="578" width="7" height="7" fill="#d79632" />
<rect x="288" y="576" width="3" height="4" fill="#00b4e6" />
<rect x="331" y="574" width="7" height="10" fill="#006e46" />
<rect x="332" y="572" width="4" height="3" fill="#00e696" />
<rect x="338" y="580" width="4" height="9" fill="#00e696" />
<rect x="349.3" y="575.7" width="5.6" height="6.3" fill="#006e46" />
<rect x="349.3" y="575.7" width="2.5" height="6.3" fill="#00e696" />
<rect x="317" y="593" width="7" height="6" fill="#00e696" />
<rect x="319" y="596" width="3" height="4" fill="#006e46" />
<rect x="326" y="590" width="10" height="8" fill="#00b4e6" />
<rect x="332" y="595" width="8" height="10" fill="#00e696" />
<rect x="336" y="591" width="6" height="6" fill="#00e696" />
<rect x="344" y="594" width="5" height="6" fill="#ffd700" />
<rect x="341" y="599" width="3" height="6" fill="#c8c8c8" />
<rect x="322" y="598" width="4" height="4" fill="#d79632" />
<rect x="318" y="601" width="6" height="7" fill="#00b4e6" />
<rect x="334" y="605" width="5" height="5" fill="#00e696" />
<rect x="349" y="600" width="3" height="4" fill="#00b4e6" />
<rect x="363" y="582" width="13" height="16.6" fill="#00e696" />
<rect x="368" y="585" width="5" height="5" fill="#d79632" />
<rect x="367" y="590" width="8" height="8" fill="#c8c8c8" />
<rect x="356" y="603" width="18" height="15" fill="#006e46" />
<rect x="363" y="604" width="7" height="9" fill="#c8c8c8" />
<rect x="365" y="606" width="4" height="4" fill="#d79632" />
<rect x="356" y="601" width="8" height="3" fill="#00e696" />
<rect x="357" y="621" width="10" height="5" fill="#00e696" />
<rect x="362" y="625" width="10" height="6" fill="#006e46" />
<rect x="375" y="621" width="8" height="6" fill="#00e696" />
<rect x="383" y="624" width="5" height="5" fill="#c8c8c8" />
<rect x="371" y="630" width="8" height="4" fill="#d79632" />
<rect x="366" y="627" width="10" height="4" fill="#00e696" />
<rect x="397" y="641" width="5" height="5" fill="#00e696" />
<rect x="297" y="606" width="6" height="6" fill="#00b4e6" />
<rect x="302" y="611" width="5" height="5" fill="#d79632" />
<rect x="305" y="617" width="7" height="4" fill="#c8c8c8" />
<rect x="300" y="622" width="9" height="5" fill="#00e696" />
<rect x="313" y="620" width="4" height="3" fill="#00b4e6" />
<rect x="301" y="636" width="7" height="7" fill="#00b4e6" />
<rect x="303" y="639" width="4" height="4" fill="#d79632" />
<rect x="306" y="646" width="5" height="10" fill="#c8c8c8" />
<rect x="309" y="652" width="4" height="9" fill="#00e696" />
<rect x="312" y="660" width="5" height="5" fill="#d79632" />
<rect x="310" y="657" width="3" height="5" fill="#00b4e6" />
<rect x="323.6" y="644.4" width="15" height="7" fill="#00b4e6" />
<rect x="334" y="650" width="6" height="6" fill="#00b4e6" />
<rect x="266" y="667" width="13" height="13" fill="#00b4e6" />
<rect x="270" y="670" width="4" height="4" fill="#006e46" />
<rect x="280" y="668" width="9" height="9" fill="#00e696" />
<rect x="284" y="672" width="3" height="4" fill="#006e46" />
<rect x="272" y="683" width="10" height="7" fill="#00e696" />
<rect x="267" y="684" width="5" height="6" fill="#00b4e6" />
<rect x="276" y="690" width="15" height="12" fill="#00e696" />
<rect x="280" y="700" width="5" height="5" fill="#c8c8c8" />
<rect x="283.5" y="700" width="4" height="5" fill="#d79632" />
<rect x="289" y="695" width="5" height="7" fill="#006e46" />
<rect x="242" y="673" width="7" height="10" fill="#00b4e6" />
<rect x="247" y="675" width="4" height="4" fill="#c8c8c8" />
<rect x="252" y="679" width="5" height="4" fill="#006e46" />
<rect x="255.6" y="691" width="6.2" height="5.5" fill="#00e696" />
<rect x="216.7" y="702" width="9" height="9" fill="#00e696" />
<rect x="220" y="705" width="5" height="5" fill="#006e46" />
<rect x="261.8" y="705" width="10.4" height="7.5" fill="#d79632" />
<rect x="264" y="710" width="6" height="3" fill="#ffd700" />
<rect x="262" y="705" width="2.5" height="4" fill="#00b4e6" />
<rect x="308" y="684" width="7" height="13" fill="#00b4e6" />
<rect x="310" y="699" width="14" height="12" fill="#00e696" />
<rect x="311" y="705" width="5" height="6" fill="#006e46" />
<rect x="316" y="677" width="12" height="8" fill="#00e696" />
<rect x="318" y="678" width="4" height="4" fill="#006e46" />
<rect x="322" y="679" width="4" height="4" fill="#c8c8c8" />
<rect x="215" y="654" width="7" height="7" fill="#00b4e6" />
<rect x="217" y="656" width="4" height="4" fill="#00e696" />
<rect x="246" y="655" width="6" height="4" fill="#00b4e6" />
<rect x="250" y="660" width="5" height="4" fill="#00b4e6" />
<rect x="355.3" y="656.9" width="15.6" height="8.9" fill="#00e696" />
<rect x="360.2" y="656.9" width="10.7" height="8.9" fill="#c8c8c8" />
<rect x="360.2" y="655.1" width="10.7" height="1.8" fill="#006e46" />
<rect x="383.3" y="655.1" width="7.6" height="7.6" fill="#00e696" />
<rect x="383.3" y="655.1" width="7.6" height="1.5" fill="#006e46" />
<rect x="334" y="646.2" width="4" height="4.5" fill="#00b4e6" />
<rect x="397.1" y="640.9" width="4.9" height="4.9" fill="#00e696" />
<rect x="342.9" y="666.2" width="12" height="18.2" fill="#00e696" />
<rect x="352" y="666.2" width="2.7" height="7.6" fill="#006e46" />
<rect x="343" y="671" width="3" height="2" fill="#006e46" />
<rect x="360.2" y="671" width="8.9" height="5.9" fill="#c8c8c8" />
<rect x="360.2" y="674.2" width="8.9" height="5.4" fill="#006e46" />
<rect x="369.1" y="666.2" width="10.7" height="7.6" fill="#00e696" />
<rect x="374" y="666.2" width="5.8" height="5" fill="#006e46" />
<rect x="362.9" y="679.6" width="5.3" height="4.8" fill="#00e696" />
<rect x="371" y="680" width="3" height="3" fill="#00e696" />
<rect x="369.1" y="684.9" width="4.9" height="5.8" fill="#00e696" />
<rect x="346" y="683.1" width="14.2" height="13.8" fill="#006e46" />
<rect x="351.8" y="684.9" width="8" height="8.9" fill="#c8c8c8" />
<rect x="354.5" y="685.5" width="2" height="5" fill="#d79632" />
<rect x="342" y="688" width="4" height="8.9" fill="#00e696" />
<rect x="355.3" y="691.1" width="7.6" height="7.6" fill="#00e696" />
<rect x="335.3" y="679.1" width="5.8" height="7.6" fill="#00e696" />
<rect x="333.6" y="680" width="3.5" height="6.7" fill="#00b4e6" />
<rect x="349.1" y="708" width="7.6" height="8" fill="#00e696" />
<rect x="402" y="671.1" width="11.1" height="8.5" fill="#006e46" />
<rect x="408.2" y="675" width="13.8" height="7.7" fill="#00e696" />
<rect x="413" y="671" width="3" height="4" fill="#00e696" />
<rect x="234.1" y="722.2" width="8.6" height="7.6" fill="#00e696" />
<rect x="268" y="718.8" width="2.8" height="3.4" fill="#00e696" />
<rect x="272.3" y="722.2" width="12.4" height="7.1" fill="#006e46" />
<rect x="276.1" y="722.2" width="5.7" height="4.8" fill="#c8c8c8" />
<rect x="268" y="727" width="17.2" height="11" fill="#00e696" />
<rect x="259.4" y="733.1" width="16.2" height="10.6" fill="#00e696" />
<rect x="273" y="733" width="6" height="4" fill="#000" />
<rect x="287.1" y="736.5" width="19.1" height="30.1" fill="#006e46" />
<rect x="285.2" y="737" width="7.6" height="6.7" fill="#c8c8c8" />
<rect x="296.2" y="741.3" width="7.6" height="8.6" fill="#d79632" />
<rect x="296.2" y="741.3" width="4" height="2.5" fill="#ffd700" />
<rect x="307.1" y="740.8" width="2.9" height="8.6" fill="#00e696" />
<rect x="303" y="749.9" width="17.5" height="3.3" fill="#006e46" />
<rect x="301.4" y="752" width="19.1" height="12.2" fill="#c8c8c8" />
<rect x="310" y="753.2" width="8.1" height="7.6" fill="#d79632" />
<rect x="304.3" y="764.2" width="13.8" height="2.8" fill="#006e46" />
<rect x="320" y="752" width="3" height="3" fill="#00e696" />
<rect x="279.4" y="755.1" width="13.4" height="13.4" fill="#c8c8c8" />
<rect x="296" y="758" width="5" height="5" fill="#00e696" />
<rect x="272.3" y="760.8" width="17.7" height="13.9" fill="#006e46" />
<rect x="279.4" y="755.1" width="10" height="10" fill="#c8c8c8" />
<rect x="276.1" y="774.7" width="8.6" height="3.3" fill="#00e696" />
<rect x="234.1" y="749.9" width="6" height="7.6" fill="#00e696" />
<rect x="240" y="749.9" width="2.7" height="7.6" fill="#006e46" />
<rect x="231.2" y="775.2" width="16.7" height="10.5" fill="#006e46" />
<rect x="237" y="775.2" width="8" height="7.6" fill="#c8c8c8" />
<rect x="261.8" y="775.2" width="9" height="7.6" fill="#006e46" />
<rect x="257" y="778" width="8.1" height="9.6" fill="#006e46" />
<rect x="247.9" y="785.7" width="17.2" height="9.3" fill="#006e46" />
<rect x="240.3" y="789.5" width="7.6" height="5.5" fill="#006e46" />
<rect x="257" y="778" width="5.2" height="4.8" fill="#00e696" />
<rect x="265" y="783" width="3" height="3" fill="#00e696" />
<rect x="198.2" y="753" width="10.4" height="10.4" fill="#006e46" />
<rect x="345.8" y="744.3" width="8.6" height="8.7" fill="#006e46" />
<rect x="346" y="750" width="5" height="3" fill="#00e696" />
<rect x="309" y="700" width="14" height="10.4" fill="#00e696" />
<rect x="313" y="703" width="6" height="6" fill="#006e46" />
<rect x="175" y="652" width="6" height="4" fill="#00e696" />
<rect x="175" y="656" width="6" height="4" fill="#006e46" />
<rect x="173" y="673" width="12" height="15" fill="#00e696" />
<rect x="173" y="671" width="8" height="6" fill="#c8c8c8" />
<rect x="176" y="677" width="6" height="5" fill="#006e46" />
<rect x="185" y="674" width="3" height="3" fill="#00e696" />
<rect x="187" y="685" width="2" height="2" fill="#00e696" />
<rect x="262" y="638" width="3" height="1" fill="#2850f0" />
<rect x="276" y="641" width="2" height="1" fill="#6a1ef0" />
<rect x="268" y="637" width="1" height="2" fill="#6a1ef0" />
<rect x="283" y="635" width="2" height="1" fill="#6a1ef0" />
<rect x="273" y="635" width="2" height="1" fill="#2846f0" />
<rect x="261" y="632" width="3" height="1" fill="#3232ff" />
<rect x="261" y="635" width="1" height="1" fill="#2850f0" />
<rect x="266" y="637" width="1" height="2" fill="#6a1ef0" />
<rect x="270" y="639" width="1" height="1" fill="#3232ff" />
<rect x="268" y="635" width="2" height="2" fill="#2846f0" />
<rect x="273" y="636" width="2" height="1" fill="#2846f0" />
<rect x="274" y="635" width="3" height="2" fill="#2850f0" />
<rect x="282" y="639" width="2" height="1" fill="#3232ff" />
<rect x="271" y="637" width="1" height="1" fill="#2850f0" />
<rect x="272" y="638" width="3" height="2" fill="#2846f0" />
<rect x="276" y="641" width="2" height="1" fill="#2850f0" />
<rect x="265" y="638" width="3" height="1" fill="#2850f0" />
<rect x="288" y="636" width="2" height="1" fill="#6a1ef0" />
<rect x="274" y="640" width="1" height="1" fill="#6a1ef0" />
<rect x="278" y="636" width="1" height="2" fill="#3232ff" />
<rect x="276" y="632" width="1" height="1" fill="#2846f0" />
<rect x="267" y="634" width="2" height="2" fill="#6a1ef0" />
<rect x="269" y="634" width="3" height="1" fill="#6a1ef0" />
<rect x="275" y="634" width="2" height="1" fill="#2846f0" />
<rect x="275" y="633" width="2" height="1" fill="#2846f0" />
<rect x="269" y="632" width="1" height="2" fill="#2850f0" />
<rect x="276" y="637" width="2" height="1" fill="#6a1ef0" />
<rect x="271" y="632" width="3" height="2" fill="#2850f0" />
<rect x="254" y="635" width="2" height="1" fill="#2846f0" />
<rect x="260" y="637" width="1" height="2" fill="#6a1ef0" />
<rect x="276" y="645" width="1" height="2" fill="#2846f0" />
<rect x="267" y="638" width="2" height="2" fill="#2846f0" />
<rect x="265" y="640" width="1" height="2" fill="#2846f0" />
<rect x="278" y="640" width="2" height="1" fill="#3232ff" />
<rect x="280" y="634" width="2" height="1" fill="#3232ff" />
<rect x="283" y="637" width="1" height="2" fill="#2850f0" />
<rect x="259" y="651" width="3" height="2" fill="#2846f0" />
<rect x="271" y="627" width="2" height="2" fill="#2846f0" />
<rect x="280" y="638" width="3" height="1" fill="#2846f0" />
<rect x="279" y="632" width="3" height="2" fill="#6a1ef0" />
<rect x="262" y="633" width="1" height="1" fill="#2846f0" />
<rect x="288" y="636" width="3" height="2" fill="#3232ff" />
<rect x="258" y="639" width="1" height="2" fill="#2846f0" />
<rect x="265" y="633" width="1" height="2" fill="#2846f0" />
<rect x="274" y="630" width="2" height="1" fill="#2850f0" />
<rect x="269" y="638" width="2" height="1" fill="#6a1ef0" />
<rect x="272" y="632" width="3" height="1" fill="#2850f0" />
<rect x="266" y="642" width="3" height="1" fill="#2846f0" />
<rect x="278" y="633" width="2" height="1" fill="#6a1ef0" />
<rect x="278" y="640" width="1" height="2" fill="#2846f0" />
<rect x="274" y="634" width="2" height="1" fill="#2850f0" />
<rect x="276" y="632" width="3" height="2" fill="#6a1ef0" />
<rect x="269" y="628" width="3" height="2" fill="#6a1ef0" />
<rect x="274" y="636" width="1" height="2" fill="#6a1ef0" />
<rect x="266" y="634" width="1" height="1" fill="#6a1ef0" />
<rect x="268" y="638" width="2" height="1" fill="#3232ff" />
<rect x="279" y="624" width="3" height="1" fill="#2846f0" />
<rect x="264" y="632" width="1" height="1" fill="#3232ff" />
<rect x="275" y="641" width="1" height="2" fill="#2846f0" />
<rect x="270" y="636" width="2" height="2" fill="#2846f0" />
<rect x="253" y="633" width="2" height="2" fill="#6a1ef0" />
<rect x="279" y="631" width="1" height="2" fill="#2846f0" />
<rect x="284" y="633" width="3" height="2" fill="#2846f0" />
<rect x="277" y="644" width="3" height="2" fill="#2846f0" />
<rect x="261" y="637" width="1" height="1" fill="#2846f0" />
<rect x="276" y="645" width="2" height="2" fill="#2846f0" />
<rect x="271" y="643" width="2" height="1" fill="#2846f0" />
<rect x="279" y="637" width="2" height="2" fill="#2850f0" />
<rect x="277" y="635" width="3" height="1" fill="#2846f0" />
<rect x="275" y="639" width="3" height="1" fill="#2846f0" />
<rect x="289" y="636" width="3" height="2" fill="#6a1ef0" />
<rect x="261" y="633" width="3" height="2" fill="#2846f0" />
<rect x="277" y="631" width="2" height="2" fill="#2846f0" />
<rect x="263" y="627" width="2" height="2" fill="#6a1ef0" />
<rect x="284" y="627" width="2" height="2" fill="#6a1ef0" />
<rect x="275" y="641" width="1" height="2" fill="#6a1ef0" />
<rect x="293" y="638" width="3" height="1" fill="#6a1ef0" />
<rect x="260" y="636" width="3" height="2" fill="#2846f0" />
<rect x="285" y="632" width="2" height="1" fill="#2850f0" />
<rect x="268" y="636" width="3" height="2" fill="#2850f0" />
<rect x="278" y="639" width="2" height="1" fill="#2846f0" />
<rect x="265" y="625" width="2" height="1" fill="#2846f0" />
<rect x="274" y="642" width="2" height="1" fill="#3232ff" />
<rect x="269" y="635" width="1" height="2" fill="#6a1ef0" />
<rect x="269" y="630" width="1" height="2" fill="#2850f0" />
<rect x="262" y="630" width="2" height="1" fill="#6a1ef0" />
<rect x="278" y="632" width="2" height="1" fill="#2846f0" />
<rect x="273" y="643" width="2" height="2" fill="#3232ff" />
<rect x="259" y="631" width="2" height="1" fill="#2846f0" />
<rect x="275" y="635" width="2" height="1" fill="#2846f0" />
<rect x="272" y="638" width="2" height="1" fill="#2850f0" />
<rect x="262" y="640" width="1" height="1" fill="#2846f0" />
<rect x="265" y="634" width="1" height="2" fill="#3232ff" />
<rect x="260" y="636" width="1" height="2" fill="#2846f0" />
<rect x="274" y="637" width="3" height="1" fill="#6a1ef0" />
<rect x="273" y="638" width="2" height="2" fill="#2846f0" />
<rect x="275" y="635" width="2" height="2" fill="#2846f0" />
<rect x="275" y="637" width="3" height="2" fill="#2850f0" />
<rect x="264" y="636" width="2" height="1" fill="#6a1ef0" />
<rect x="270" y="635" width="2" height="2" fill="#2846f0" />
<rect x="259" y="638" width="2" height="1" fill="#2850f0" />
<rect x="284" y="640" width="1" height="2" fill="#3232ff" />
<rect x="267" y="635" width="2" height="2" fill="#6a1ef0" />
<rect x="271" y="638" width="3" height="1" fill="#2846f0" />
<rect x="285" y="631" width="3" height="1" fill="#3232ff" />
<rect x="261" y="640" width="2" height="2" fill="#2846f0" />
<rect x="271" y="636" width="1" height="1" fill="#3232ff" />
<rect x="269" y="647" width="2" height="1" fill="#3232ff" />
<rect x="266" y="631" width="1" height="2" fill="#6a1ef0" />
<rect x="263" y="636" width="1" height="2" fill="#2846f0" />
<rect x="274" y="636" width="1" height="1" fill="#6a1ef0" />
<rect x="272" y="640" width="2" height="2" fill="#2846f0" />
<rect x="278" y="636" width="2" height="2" fill="#3232ff" />
<rect x="282" y="635" width="3" height="1" fill="#2846f0" />
<rect x="261" y="634" width="3" height="1" fill="#2846f0" />
<rect x="256" y="643" width="1" height="2" fill="#2850f0" />
<rect x="280" y="635" width="3" height="2" fill="#6a1ef0" />
<rect x="268" y="639" width="2" height="2" fill="#3232ff" />
<rect x="286" y="637" width="1" height="1" fill="#6a1ef0" />
<rect x="262" y="639" width="2" height="2" fill="#2846f0" />
<rect x="295" y="640" width="1" height="1" fill="#3232ff" />
<rect x="264" y="638" width="1" height="1" fill="#2846f0" />
<rect x="284" y="633" width="2" height="1" fill="#2850f0" />
<rect x="269" y="635" width="3" height="2" fill="#6a1ef0" />
<rect x="284" y="642" width="2" height="1" fill="#3232ff" />
<rect x="269" y="638" width="3" height="2" fill="#2850f0" />
<rect x="264" y="631" width="2" height="2" fill="#3232ff" />
<rect x="271" y="633" width="2" height="2" fill="#2846f0" />
<rect x="270" y="642" width="2" height="2" fill="#6a1ef0" />
<rect x="272" y="633" width="2" height="1" fill="#2846f0" />
<rect x="271" y="636" width="3" height="1" fill="#3232ff" />
<rect x="269" y="635" width="2" height="1" fill="#6a1ef0" />
<rect x="273" y="627" width="2" height="2" fill="#2846f0" />
<rect x="265" y="636" width="2" height="2" fill="#3232ff" />
<rect x="272" y="628" width="1" height="2" fill="#2846f0" />
<rect x="276" y="631" width="3" height="2" fill="#2846f0" />
<rect x="272" y="632" width="2" height="1" fill="#2846f0" />
<rect x="258" y="626" width="2" height="1" fill="#3232ff" />
<rect x="265" y="638" width="3" height="2" fill="#2846f0" />
<rect x="275" y="637" width="3" height="2" fill="#6a1ef0" />
<rect x="268" y="643" width="2" height="1" fill="#2846f0" />
<rect x="281" y="633" width="3" height="2" fill="#3232ff" />
<rect x="271" y="638" width="2" height="2" fill="#3232ff" />
<rect x="278" y="634" width="2" height="2" fill="#2850f0" />
<rect x="247" y="634" width="2" height="1" fill="#2850f0" />
<rect x="257" y="642" width="2" height="1" fill="#6a1ef0" />
<rect x="267" y="639" width="3" height="2" fill="#3232ff" />
<rect x="276" y="629" width="3" height="1" fill="#3232ff" />
<rect x="277" y="631" width="1" height="2" fill="#2846f0" />
<rect x="277" y="634" width="2" height="1" fill="#2846f0" />
<rect x="262" y="635" width="3" height="1" fill="#2846f0" />
<rect x="266" y="634" width="1" height="2" fill="#6a1ef0" />
<rect x="283" y="639" width="1" height="1" fill="#3232ff" />
<rect x="269" y="634" width="2" height="1" fill="#2850f0" />
<rect x="255" y="637" width="3" height="2" fill="#3232ff" />
<rect x="263" y="642" width="2" height="2" fill="#3232ff" />
<rect x="258" y="637" width="1" height="2" fill="#2846f0" />
<rect x="273" y="624" width="1" height="2" fill="#3232ff" />
<rect x="280" y="628" width="1" height="2" fill="#6a1ef0" />
<rect x="268" y="629" width="3" height="1" fill="#2850f0" />
<rect x="272" y="638" width="2" height="2" fill="#2850f0" />
<rect x="274" y="640" width="2" height="1" fill="#3232ff" />
<rect x="259" y="637" width="2" height="1" fill="#3232ff" />
<rect x="283" y="632" width="3" height="1" fill="#2846f0" />
<rect x="270" y="639" width="2" height="1" fill="#3232ff" />
<rect x="265" y="633" width="2" height="2" fill="#6a1ef0" />
<rect x="275" y="639" width="2" height="2" fill="#2846f0" />
<rect x="278" y="632" width="2" height="1" fill="#2850f0" />
<rect x="266" y="636" width="2" height="1" fill="#2846f0" />
<rect x="275" y="632" width="2" height="1" fill="#6a1ef0" />
<rect x="269" y="633" width="3" height="2" fill="#2846f0" />
<rect x="266" y="637" width="2" height="2" fill="#2850f0" />
<rect x="276" y="639" width="2" height="2" fill="#3232ff" />
<rect x="269" y="636" width="2" height="1" fill="#6a1ef0" />
<rect x="277" y="645" width="2" height="1" fill="#2846f0" />
<rect x="265" y="641" width="1" height="2" fill="#6a1ef0" />
<rect x="271" y="634" width="2" height="1" fill="#6a1ef0" />
<rect x="274" y="632" width="3" height="1" fill="#2846f0" />
<rect x="280" y="637" width="2" height="2" fill="#2850f0" />
<rect x="269" y="640" width="2" height="2" fill="#6a1ef0" />
<rect x="271" y="635" width="2" height="1" fill="#2846f0" />
<rect x="266" y="631" width="3" height="1" fill="#2846f0" />
<rect x="280" y="631" width="2" height="2" fill="#2850f0" />
<rect x="264" y="634" width="2" height="1" fill="#2846f0" />
<rect x="270" y="640" width="2" height="2" fill="#6a1ef0" />
<rect x="272" y="631" width="2" height="1" fill="#2846f0" />
<rect x="276" y="642" width="2" height="2" fill="#3232ff" />
<rect x="260" y="633" width="3" height="2" fill="#3232ff" />
<rect x="276" y="637" width="2" height="1" fill="#2846f0" />
<rect x="275" y="640" width="1" height="1" fill="#2850f0" />
<rect x="273" y="638" width="3" height="2" fill="#2846f0" />
<rect x="273" y="632" width="2" height="1" fill="#2850f0" />
<rect x="274" y="628" width="3" height="2" fill="#2850f0" />
<rect x="282" y="633" width="2" height="1" fill="#2850f0" />
<rect x="266" y="631" width="2" height="2" fill="#2846f0" />
<rect x="275" y="639" width="1" height="2" fill="#2850f0" />
<rect x="274" y="640" width="1" height="1" fill="#3232ff" />
<rect x="272" y="641" width="2" height="2" fill="#3232ff" />
<rect x="265" y="633" width="2" height="1" fill="#6a1ef0" />
<rect x="270" y="636" width="1" height="1" fill="#2846f0" />
<rect x="272" y="642" width="2" height="1" fill="#3232ff" />
<rect x="279" y="634" width="1" height="2" fill="#2850f0" />
<rect x="276" y="636" width="1" height="2" fill="#6a1ef0" />
<rect x="278" y="642" width="2" height="1" fill="#3232ff" />
<rect x="273" y="636" width="2" height="2" fill="#3232ff" />
<rect x="274" y="634" width="1" height="2" fill="#6a1ef0" />
<rect x="277" y="637" width="2" height="2" fill="#2846f0" />
<rect x="263" y="632" width="2" height="1" fill="#2846f0" />
<rect x="270" y="637" width="3" height="1" fill="#6a1ef0" />
<rect x="268" y="635" width="2" height="2" fill="#6a1ef0" />
<rect x="273" y="646" width="1" height="1" fill="#2846f0" />
<rect x="264" y="639" width="3" height="2" fill="#2846f0" />
<rect x="263" y="639" width="3" height="2" fill="#6a1ef0" />
<rect x="246" y="637" width="3" height="1" fill="#2850f0" />
<rect x="256" y="632" width="2" height="2" fill="#6a1ef0" />
<rect x="270" y="636" width="2" height="2" fill="#2846f0" />
<rect x="271" y="630" width="1" height="1" fill="#3232ff" />
<rect x="278" y="639" width="3" height="1" fill="#6a1ef0" />
<rect x="268" y="636" width="2" height="2" fill="#2846f0" />
<rect x="287" y="633" width="3" height="1" fill="#3232ff" />
<rect x="274" y="643" width="1" height="1" fill="#6a1ef0" />
<rect x="284" y="640" width="3" height="1" fill="#2846f0" />
<rect x="268" y="642" width="2" height="1" fill="#2846f0" />
<rect x="288" y="639" width="3" height="1" fill="#6a1ef0" />
<rect x="265" y="640" width="2" height="1" fill="#2846f0" />
<rect x="265" y="637" width="3" height="1" fill="#3232ff" />
<rect x="292" y="631" width="2" height="1" fill="#2850f0" />
<rect x="267" y="645" width="2" height="2" fill="#2846f0" />
<rect x="276" y="633" width="1" height="1" fill="#2850f0" />
<rect x="264" y="631" width="2" height="1" fill="#6a1ef0" />
<rect x="278" y="644" width="1" height="2" fill="#2846f0" />
<rect x="271" y="632" width="3" height="1" fill="#3232ff" />
<rect x="262" y="645" width="3" height="1" fill="#2850f0" />
<rect x="280" y="643" width="2" height="2" fill="#2846f0" />
<rect x="274" y="639" width="2" height="2" fill="#3232ff" />
<rect x="275" y="631" width="2" height="2" fill="#2846f0" />
<rect x="276" y="634" width="2" height="1" fill="#2846f0" />
<rect x="270" y="635" width="3" height="1" fill="#2846f0" />
<rect x="270" y="636" width="2" height="2" fill="#6a1ef0" />
<rect x="263" y="639" width="2" height="1" fill="#2846f0" />
<rect x="272" y="639" width="1" height="1" fill="#6a1ef0" />
<rect x="273" y="634" width="3" height="2" fill="#2846f0" />
<rect x="289" y="636" width="2" height="1" fill="#2846f0" />
<rect x="261" y="634" width="2" height="2" fill="#3232ff" />
<rect x="274" y="631" width="2" height="1" fill="#6a1ef0" />
<rect x="279" y="639" width="2" height="1" fill="#2850f0" />
<rect x="271" y="641" width="3" height="2" fill="#6a1ef0" />
<rect x="283" y="637" width="3" height="1" fill="#2846f0" />
<rect x="267" y="641" width="3" height="2" fill="#6a1ef0" />
<rect x="259" y="636" width="1" height="1" fill="#2846f0" />
<rect x="281" y="633" width="2" height="1" fill="#6a1ef0" />
<rect x="280" y="637" width="2" height="2" fill="#3232ff" />
<rect x="285" y="640" width="3" height="2" fill="#2846f0" />
<rect x="272" y="641" width="3" height="1" fill="#6a1ef0" />
<rect x="268" y="640" width="1" height="1" fill="#2846f0" />
<rect x="258" y="636" width="2" height="2" fill="#2846f0" />
<rect x="249" y="634" width="2" height="2" fill="#2846f0" />
<rect x="275" y="635" width="2" height="2" fill="#2850f0" />
<rect x="269" y="637" width="2" height="2" fill="#2846f0" />
<rect x="272" y="641" width="3" height="2" fill="#2846f0" />
<rect x="264" y="619" width="2" height="2" fill="#2846f0" />
<rect x="266" y="619" width="1" height="2" fill="#2846f0" />
<rect x="276" y="626" width="1" height="2" fill="#7814f0" />
<rect x="281" y="619" width="2" height="1" fill="#6a1ef0" />
<rect x="270" y="619" width="1" height="2" fill="#6a1ef0" />
<rect x="270" y="623" width="2" height="2" fill="#7814f0" />
<rect x="272" y="623" width="1" height="2" fill="#6a1ef0" />
<rect x="273" y="621" width="1" height="2" fill="#7814f0" />
<rect x="281" y="623" width="1" height="2" fill="#2846f0" />
<rect x="270" y="626" width="1" height="2" fill="#6a1ef0" />
<rect x="269" y="619" width="2" height="1" fill="#6a1ef0" />
<rect x="276" y="626" width="1" height="2" fill="#7814f0" />
<rect x="271" y="626" width="2" height="2" fill="#7814f0" />
<rect x="277" y="622" width="1" height="2" fill="#7814f0" />
<rect x="274" y="622" width="1" height="1" fill="#2846f0" />
<rect x="274" y="617" width="2" height="2" fill="#7814f0" />
<rect x="272" y="624" width="2" height="2" fill="#2846f0" />
<rect x="271" y="621" width="1" height="2" fill="#2846f0" />
<rect x="276" y="621" width="2" height="2" fill="#6a1ef0" />
<rect x="264" y="621" width="1" height="1" fill="#6a1ef0" />
<rect x="279" y="624" width="2" height="1" fill="#2846f0" />
<rect x="268" y="624" width="1" height="2" fill="#2846f0" />
<rect x="264" y="625" width="2" height="1" fill="#2846f0" />
<rect x="267" y="625" width="1" height="2" fill="#7814f0" />
<rect x="263" y="621" width="2" height="2" fill="#7814f0" />
<rect x="276" y="619" width="2" height="1" fill="#7814f0" />
<rect x="277" y="621" width="1" height="1" fill="#2846f0" />
<rect x="269" y="621" width="1" height="2" fill="#2846f0" />
<rect x="267" y="626" width="2" height="1" fill="#7814f0" />
<rect x="264" y="626" width="2" height="2" fill="#6a1ef0" />
<rect x="270" y="625" width="2" height="2" fill="#2846f0" />
<rect x="269" y="620" width="1" height="1" fill="#7814f0" />
<rect x="268" y="621" width="2" height="2" fill="#2846f0" />
<rect x="280" y="623" width="2" height="2" fill="#7814f0" />
<rect x="263" y="624" width="1" height="1" fill="#2846f0" />
<rect x="263" y="622" width="2" height="1" fill="#7814f0" />
<rect x="263" y="622" width="2" height="2" fill="#7814f0" />
<rect x="263" y="618" width="2" height="2" fill="#7814f0" />
<rect x="269" y="627" width="1" height="1" fill="#7814f0" />
<rect x="267" y="624" width="1" height="1" fill="#2846f0" />
<rect x="282" y="617" width="2" height="1" fill="#2846f0" />
<rect x="278" y="626" width="2" height="2" fill="#7814f0" />
<rect x="264" y="617" width="1" height="2" fill="#2846f0" />
<rect x="265" y="619" width="1" height="1" fill="#7814f0" />
<rect x="274" y="622" width="2" height="2" fill="#7814f0" />
<rect x="268" y="624" width="2" height="1" fill="#2846f0" />
<rect x="267" y="620" width="1" height="1" fill="#6a1ef0" />
<rect x="282" y="625" width="2" height="1" fill="#7814f0" />
<rect x="272" y="624" width="1" height="1" fill="#2846f0" />
<rect x="279" y="626" width="1" height="2" fill="#7814f0" />
<rect x="285" y="615" width="3" height="1" fill="#2850f0" />
<rect x="282" y="614" width="2" height="1" fill="#00b4e6" />
<rect x="290" y="611" width="1" height="1" fill="#00b4e6" />
<rect x="292" y="614" width="2" height="1" fill="#00b4e6" />
<rect x="290" y="614" width="2" height="1" fill="#2846f0" />
<rect x="280" y="613" width="3" height="1" fill="#2850f0" />
<rect x="282" y="611" width="1" height="1" fill="#2850f0" />
<rect x="288" y="617" width="1" height="1" fill="#2850f0" />
<rect x="290" y="613" width="3" height="1" fill="#00b4e6" />
<rect x="285" y="617" width="1" height="1" fill="#2846f0" />
<rect x="281" y="617" width="1" height="1" fill="#2846f0" />
<rect x="283" y="615" width="1" height="1" fill="#2850f0" />
<rect x="284" y="610" width="3" height="1" fill="#2850f0" />
<rect x="281" y="610" width="2" height="1" fill="#00b4e6" />
<rect x="283" y="613" width="3" height="1" fill="#2850f0" />
<rect x="291" y="617" width="2" height="1" fill="#00b4e6" />
<rect x="290" y="614" width="1" height="1" fill="#2850f0" />
<rect x="281" y="611" width="2" height="1" fill="#2850f0" />
<rect x="285" y="611" width="1" height="1" fill="#2850f0" />
<rect x="288" y="611" width="3" height="1" fill="#2850f0" />
<rect x="283" y="612" width="2" height="1" fill="#2846f0" />
<rect x="284" y="612" width="1" height="1" fill="#2846f0" />
<rect x="279" y="616" width="2" height="1" fill="#00b4e6" />
<rect x="279" y="611" width="2" height="1" fill="#2846f0" />
<rect x="295" y="611" width="2" height="1" fill="#2850f0" />
<rect x="279" y="612" width="3" height="1" fill="#2850f0" />
<rect x="287" y="612" width="3" height="1" fill="#00b4e6" />
<rect x="292" y="612" width="1" height="1" fill="#2850f0" />
<rect x="293" y="617" width="2" height="1" fill="#00b4e6" />
<rect x="292" y="615" width="1" height="1" fill="#2846f0" />
<rect x="294" y="614" width="3" height="1" fill="#2846f0" />
<rect x="283" y="610" width="3" height="1" fill="#2850f0" />
<rect x="279" y="613" width="1" height="1" fill="#2846f0" />
<rect x="294" y="610" width="3" height="1" fill="#2850f0" />
<rect x="292" y="616" width="3" height="1" fill="#2850f0" />
<rect x="285" y="616" width="3" height="1" fill="#2846f0" />
<rect x="294" y="613" width="3" height="1" fill="#2850f0" />
<rect x="282" y="616" width="1" height="1" fill="#2846f0" />
<rect x="288" y="612" width="2" height="1" fill="#00b4e6" />
<rect x="284" y="615" width="2" height="1" fill="#00b4e6" />
<rect x="261" y="618" width="2" height="1" fill="#00b4e6" />
<rect x="267" y="641" width="2" height="1" fill="#00b4e6" />
<rect x="277" y="640" width="1" height="2" fill="#00b4e6" />
<rect x="276" y="645" width="1" height="1" fill="#2850f0" />
<rect x="262" y="644" width="1" height="2" fill="#00b4e6" />
<rect x="284" y="634" width="1" height="1" fill="#2846f0" />
<rect x="262" y="650" width="1" height="2" fill="#2850f0" />
<rect x="246" y="634" width="2" height="2" fill="#00b4e6" />
<rect x="290" y="615" width="1" height="2" fill="#2850f0" />
<rect x="289" y="615" width="1" height="1" fill="#00b4e6" />
<rect x="261" y="618" width="1" height="1" fill="#00b4e6" />
<rect x="253" y="614" width="2" height="1" fill="#2846f0" />
<rect x="283" y="612" width="2" height="2" fill="#00b4e6" />
<rect x="248" y="635" width="1" height="2" fill="#00b4e6" />
<rect x="261" y="627" width="1" height="2" fill="#2850f0" />
<rect x="270" y="641" width="1" height="2" fill="#2846f0" />
<rect x="256" y="626" width="2" height="2" fill="#2846f0" />
<rect x="270" y="604" width="2" height="1" fill="#2846f0" />
<rect x="272" y="606" width="1" height="1" fill="#2846f0" />
<rect x="283" y="613" width="1" height="1" fill="#2846f0" />
<rect x="245" y="628" width="1" height="1" fill="#2846f0" />
<rect x="268" y="616" width="2" height="2" fill="#2846f0" />
<rect x="248" y="625" width="1" height="2" fill="#2850f0" />
<rect x="286" y="627" width="1" height="2" fill="#2850f0" />
<rect x="281" y="622" width="2" height="1" fill="#00b4e6" />
<rect x="284" y="628" width="1" height="2" fill="#2846f0" />
<rect x="281" y="636" width="2" height="1" fill="#2850f0" />
<rect x="282" y="639" width="2" height="1" fill="#00b4e6" />
<rect x="253" y="614" width="1" height="1" fill="#00b4e6" />
<rect x="278" y="649" width="1" height="2" fill="#2850f0" />
<rect x="288" y="632" width="2" height="2" fill="#00b4e6" />
<rect x="254" y="617" width="1" height="1" fill="#2846f0" />
<rect x="266" y="613" width="1" height="2" fill="#2846f0" />
<rect x="271" y="646" width="2" height="2" fill="#2846f0" />
<rect x="284" y="631" width="1" height="2" fill="#2850f0" />
<rect x="274" y="617" width="1" height="2" fill="#2850f0" />
<rect x="257" y="644" width="2" height="2" fill="#2846f0" />
<rect x="246" y="629" width="2" height="2" fill="#2846f0" />
<rect x="259" y="631" width="1" height="2" fill="#2846f0" />
<rect x="264" y="614" width="2" height="2" fill="#2846f0" />
<rect x="271" y="610" width="2" height="1" fill="#2850f0" />
<rect x="259" y="637" width="2" height="2" fill="#2850f0" />
<rect x="266" y="621" width="1" height="1" fill="#2850f0" />
<rect x="258" y="644" width="2" height="2" fill="#2850f0" />
<rect x="270" y="642" width="1" height="1" fill="#2850f0" />
<rect x="255" y="625" width="8" height="14" fill="#2846f0" />
<rect x="258" y="632" width="22" height="10" fill="#2846f0" />
<rect x="262" y="640" width="18" height="5" fill="#3232ff" />
<rect x="270" y="622" width="6" height="5" fill="#6a1ef0" />
<rect x="274" y="628" width="6" height="4" fill="#6a1ef0" />
<rect x="280" y="636" width="10" height="6" fill="#2846f0" />
<rect x="284" y="632" width="4" height="4" fill="#00b4e6" />
<rect x="268" y="636" width="4" height="3" fill="#00b4e6" />
<rect x="260" y="605" width="2" height="7" fill="#2846f0" />
<rect x="270" y="606" width="2" height="2" fill="#00b4e6" />
<rect x="298" y="621" width="14" height="2.5" fill="#ffffff" />
</g>
<g clip-path="url(#polclip)" shape-rendering="crispEdges" stroke="#ffffff" stroke-width="1" fill="none">
<circle cx="272" cy="628.5" r="28"/>
<circle cx="272" cy="628.5" r="56"/>
<circle cx="272" cy="628.5" r="84"/>
<circle cx="272" cy="628.5" r="112"/>
<circle cx="272" cy="628.5" r="140"/>
<circle cx="272" cy="628.5" r="168"/>
<circle cx="272" cy="628.5" r="196"/>
<circle cx="272" cy="628.5" r="224"/>
<line x1="300.0" y1="628.5" x2="496.0" y2="628.5"/>
<line x1="291.8" y1="608.7" x2="430.4" y2="470.1"/>
<line x1="272.0" y1="600.5" x2="272.0" y2="404.5"/>
<line x1="252.2" y1="608.7" x2="113.6" y2="470.1"/>
<line x1="244.0" y1="628.5" x2="48.0" y2="628.5"/>
<line x1="252.2" y1="648.3" x2="113.6" y2="786.9"/>
<line x1="272.0" y1="656.5" x2="272.0" y2="852.5"/>
<line x1="291.8" y1="648.3" x2="430.4" y2="786.9"/>
</g>
<polyline points="264,629.5 300,631 360,634.5 431.7,639.8" fill="none" stroke="#ff0000" stroke-width="3" shape-rendering="auto"/>
<line x1="76.0" y1="512.5" x2="87.0" y2="512.5" stroke="#f5eb8c" stroke-width="1" />
<line x1="81.5" y1="507.0" x2="81.5" y2="518.0" stroke="#f5eb8c" stroke-width="1" />
<line x1="461.0" y1="512.5" x2="472.0" y2="512.5" stroke="#f5eb8c" stroke-width="1" />
<line x1="466.5" y1="507.0" x2="466.5" y2="518.0" stroke="#f5eb8c" stroke-width="1" />
<text x="44" y="513" font-family="Liberation Sans" font-size="7" fill="#f5eb8c" text-anchor="middle" >10</text>
<text x="77" y="807" font-family="Liberation Sans" font-size="7" fill="#f5eb8c" text-anchor="middle" >–105</text>
<text x="466" y="807" font-family="Liberation Sans" font-size="7" fill="#f5eb8c" text-anchor="middle" >–100</text>
<text x="16" y="447.5" font-family="Liberation Sans" font-size="24" fill="#fff"><tspan fill="#ffff00">2–aug–1997,11:05:00</tspan>  maxdz plot.  maxdz plot.</text>
<text x="16" y="479.5" font-family="Liberation Sans" font-size="24" fill="#fff" text-anchor="start" >rhb_met track.</text>
<line x1="487" y1="458.5" x2="574" y2="458.5" stroke="#a8a8a8" stroke-width="1" />
<text x="490" y="471" font-family="Liberation Sans" font-size="16.5" fill="#fff" text-anchor="start" >maxdz</text>
<rect x="490" y="485" width="10" height="7" fill="#ff8080" />
<rect x="490" y="492" width="10" height="7" fill="#ff8c96" />
<rect x="490" y="499" width="10" height="7" fill="#ffaa64" />
<rect x="490" y="506" width="10" height="7" fill="#ffd7aa" />
<rect x="490" y="513" width="10" height="7" fill="#ffd700" />
<rect x="490" y="520" width="10" height="7" fill="#e6b41e" />
<rect x="490" y="527" width="10" height="7" fill="#d28c32" />
<rect x="490" y="534" width="10" height="7" fill="#c8c8c8" />
<rect x="490" y="541" width="10" height="7" fill="#006e46" />
<rect x="490" y="548" width="10" height="7" fill="#00e696" />
<rect x="490" y="555" width="10" height="7" fill="#00b4e6" />
<rect x="490" y="562" width="10" height="7" fill="#0078e6" />
<rect x="490" y="569" width="10" height="7" fill="#1e3cdc" />
<rect x="490" y="576" width="10" height="7" fill="#5028e6" />
<rect x="490" y="583" width="10" height="7" fill="#7014f0" />
<rect x="490" y="590" width="10" height="7" fill="#8c00ff" />
<text x="505" y="492.8" font-family="Liberation Sans" font-size="17.6" fill="#fff" text-anchor="start" >65.0</text>
<text x="505" y="520.8" font-family="Liberation Sans" font-size="17.6" fill="#fff" text-anchor="start" >45.0</text>
<text x="505" y="548.8" font-family="Liberation Sans" font-size="17.6" fill="#fff" text-anchor="start" >25.0</text>
<text x="505" y="576.8" font-family="Liberation Sans" font-size="17.6" fill="#fff" text-anchor="start" >5.0</text>
<text x="505" y="604.8" font-family="Liberation Sans" font-size="17.6" fill="#fff" text-anchor="start" >–15.0</text>
<line x1="487" y1="626.5" x2="574" y2="626.5" stroke="#a8a8a8" stroke-width="1" />
<text x="490" y="639" font-family="Liberation Sans" font-size="16.5" fill="#fff" text-anchor="start" >maxdz</text>
<rect x="490" y="653" width="10" height="7" fill="#ff8080" />
<rect x="490" y="660" width="10" height="7" fill="#ff8c96" />
<rect x="490" y="667" width="10" height="7" fill="#ffaa64" />
<rect x="490" y="674" width="10" height="7" fill="#ffd7aa" />
<rect x="490" y="681" width="10" height="7" fill="#ffd700" />
<rect x="490" y="688" width="10" height="7" fill="#e6b41e" />
<rect x="490" y="695" width="10" height="7" fill="#d28c32" />
<rect x="490" y="702" width="10" height="7" fill="#c8c8c8" />
<rect x="490" y="709" width="10" height="7" fill="#006e46" />
<rect x="490" y="716" width="10" height="7" fill="#00e696" />
<rect x="490" y="723" width="10" height="7" fill="#00b4e6" />
<rect x="490" y="730" width="10" height="7" fill="#0078e6" />
<rect x="490" y="737" width="10" height="7" fill="#1e3cdc" />
<rect x="490" y="744" width="10" height="7" fill="#5028e6" />
<rect x="490" y="751" width="10" height="7" fill="#7014f0" />
<rect x="490" y="758" width="10" height="7" fill="#8c00ff" />
<text x="505" y="660.8" font-family="Liberation Sans" font-size="17.6" fill="#fff" text-anchor="start" >65.0</text>
<text x="505" y="688.8" font-family="Liberation Sans" font-size="17.6" fill="#fff" text-anchor="start" >45.0</text>
<text x="505" y="716.8" font-family="Liberation Sans" font-size="17.6" fill="#fff" text-anchor="start" >25.0</text>
<text x="505" y="744.8" font-family="Liberation Sans" font-size="17.6" fill="#fff" text-anchor="start" >5.0</text>
<text x="505" y="772.8" font-family="Liberation Sans" font-size="17.6" fill="#fff" text-anchor="start" >–15.0</text>
<line x1="487" y1="794.5" x2="574" y2="794.5" stroke="#a8a8a8" stroke-width="1" />
<text x="490" y="808" font-family="Liberation Sans" font-size="10" fill="#ff0000" text-anchor="start" >rhb_met</text>
<line x1="487" y1="820" x2="574" y2="820" stroke="#a8a8a8" stroke-width="1" />
<text x="381" y="860" font-family="Liberation Sans" font-size="24" fill="#fff" text-anchor="start" >Alt: 0.50 km MSL</text>
<rect x="10.5" y="821.5" width="45" height="47" fill="#191970" stroke="#9a9a9a" stroke-width="1"/>
<g transform="translate(10,821)" shape-rendering="auto">
<path d="M6.7,12 C9,8 14,7 18,7.5 C24,8 27,11 32,10.7 C35,10.5 36.5,9.5 37.5,9 C33,14 27,19 21,26 C16,32 10,37 6,40 C10,36 15,35 20,35.5 C26,36 28,39.5 33,39.5 C36,39 38,37 39,35" fill="none" stroke="#ffff00" stroke-width="2"/>
</g>
<rect x="57.5" y="821.5" width="45" height="47" fill="#6e6e6e" stroke="#9a9a9a" stroke-width="1"/>
<g transform="translate(57,821)" shape-rendering="auto">
<text x="3" y="15" font-family="Liberation Sans" font-size="13" font-weight="bold" fill="#e4e4e4" textLength="30" lengthAdjust="spacingAndGlyphs">GOES</text>
<defs><pattern id="chk57_821" width="2" height="2" patternUnits="userSpaceOnUse"><rect width="1" height="1" fill="#e4e4e4"/><rect x="1" y="1" width="1" height="1" fill="#e4e4e4"/></pattern></defs>
<path d="M3,17 L7,17 C14,19 20,25 23,36 L23,44 L3,44 Z" fill="url(#chk57_821)"/>
<path d="M15,24 C19,26 21,30 23,35 L19,36 C17,32 15,29 15,24 Z" fill="#e4e4e4"/>
<rect x="3" y="36" width="9" height="8" fill="#e4e4e4"/>
<path d="M22,27 L41,21 M22,33 L41,21" stroke="#e4e4e4" stroke-width="1" stroke-dasharray="1 2" fill="none"/>
<path d="M41,18 L44,21 L41,24 L38,21 Z" fill="#e4e4e4"/>
<text x="25" y="44" font-family="Liberation Sans" font-size="10" fill="#e4e4e4">.IR</text>
</g>
<rect x="104.5" y="821.5" width="45" height="47" fill="#191970" stroke="#9a9a9a" stroke-width="1"/>
<g transform="translate(104,821)" shape-rendering="auto">
<path d="M5,9 C8,20 15,27 27,31" fill="none" stroke="#ffff00" stroke-width="1.6"/>
<path d="M11,21 L16,21 L16,26" fill="none" stroke="#ffff00" stroke-width="1"/>
<path d="M10,26 L13,26 L15,36 L15,41 L8,41 L8,36 Z" fill="#ffff00"/>
<text x="36" y="15" font-family="Liberation Sans" font-size="11" fill="#ffff00" text-anchor="middle" font-weight="normal">S</text>
<text x="36" y="26" font-family="Liberation Sans" font-size="11" fill="#ffff00" text-anchor="middle" font-weight="normal">U</text>
<text x="36" y="37" font-family="Liberation Sans" font-size="11" fill="#ffff00" text-anchor="middle" font-weight="normal">R</text>
</g>
<rect x="151.5" y="821.5" width="45" height="47" fill="#191970" stroke="#9a9a9a" stroke-width="1"/>
<g transform="translate(151,821)" shape-rendering="auto">
<path d="M5.5,5.5 H40.5 V42.5 H5.5 Z M14.5,5.5 V42.5 M23.5,5.5 V42.5 M31.5,5.5 V42.5 M5.5,14.5 H40.5 M5.5,23.5 H40.5 M5.5,32.5 H40.5" fill="none" stroke="#ffff00" stroke-width="1"/>
<path d="M13,10 C16,20 22,27 33,31" fill="none" stroke="#ffff00" stroke-width="1.6"/>
<path d="M17,26 L20,26 L21,36 L21,41 L15,41 L15,36 Z" fill="#ffff00"/>
</g>
<rect x="198.5" y="821.5" width="13" height="47" fill="#191970" stroke="#9a9a9a" stroke-width="1"/>
<g transform="translate(198,821)" shape-rendering="auto">
<text x="7" y="12.0" font-family="Liberation Sans" font-size="7" fill="#ffff00" text-anchor="middle" font-weight="normal">B</text>
<text x="7" y="18.4" font-family="Liberation Sans" font-size="7" fill="#ffff00" text-anchor="middle" font-weight="normal">O</text>
<text x="7" y="24.8" font-family="Liberation Sans" font-size="7" fill="#ffff00" text-anchor="middle" font-weight="normal">U</text>
<text x="7" y="31.200000000000003" font-family="Liberation Sans" font-size="7" fill="#ffff00" text-anchor="middle" font-weight="normal">N</text>
<text x="7" y="37.6" font-family="Liberation Sans" font-size="7" fill="#ffff00" text-anchor="middle" font-weight="normal">D</text>
<text x="7" y="44.0" font-family="Liberation Sans" font-size="7" fill="#ffff00" text-anchor="middle" font-weight="normal">S</text>
</g>
<rect x="213.5" y="845.5" width="21" height="23" fill="#191970" stroke="#9a9a9a" stroke-width="1"/>
<g transform="translate(213,845)" shape-rendering="auto">
<path d="M3.5,4.5 H18.5 V20.5 H3.5 Z M8.5,4.5 V20.5 M13.5,4.5 V20.5 M3.5,9.5 H18.5 M3.5,14.5 H18.5" fill="none" stroke="#ffff00" stroke-width="1"/>
</g>
<rect x="236.5" y="821.5" width="20" height="47" fill="#191970" stroke="#9a9a9a" stroke-width="1"/>
<g transform="translate(236,821)" shape-rendering="auto">
<path d="M3.1,4.4 L7.1,3.8 L7.4,5.5 L5.1,7.5 L3.4,10.4 Z M9.1,5.2 L13.8,4.9 L16.1,3.8 L17.8,4.4 L16.1,6.1 L13.8,6.7 L14.3,9.6 L16.1,11.9 L13.8,14.8 L12.6,11.3 L11.5,9.6 L10.3,7.2 Z M3.1,12.5 L5.7,11.9 L6.2,14.8 L4.5,14.2 Z" fill="#ffff00"/>
<path d="M7.5,27.5 V20.5 L10,23 L12.5,20.5 V27.5 M7.5,35.5 V30.5 Q7.5,28.5 10,28.5 Q12.5,28.5 12.5,30.5 V35.5 M7.5,32.5 H12.5 M7.5,43.5 V36.5 H11.5 Q12.5,36.5 12.5,38 V39 Q12.5,40.5 11.5,40.5 H7.5" fill="none" stroke="#ffff00" stroke-width="1.2"/>
</g>
<rect x="258.5" y="821.5" width="20" height="47" fill="#191970" stroke="#9a9a9a" stroke-width="1"/>
<g transform="translate(258,821)" shape-rendering="auto">
<circle cx="10.5" cy="23.4" r="6.5" fill="none" stroke="#ffff00" stroke-width="1.2"/>
<circle cx="10.5" cy="23.4" r="3" fill="none" stroke="#ffff00" stroke-width="1.2"/>
<path d="M3.0,23.4 H7.5 M13.5,23.4 H18.0 M10.5,15.899999999999999 V20.4 M10.5,26.4 V30.9 M5.9,18.799999999999997 L8.4,21.299999999999997 M15.1,28.0 L12.6,25.5 M15.1,18.799999999999997 L12.6,21.299999999999997 M5.9,28.0 L8.4,25.5 M6.5,16.2 H14.5 M6.5,30.599999999999998 H14.5" stroke="#ffff00" stroke-width="1"/>
</g>
<rect x="280.5" y="845.5" width="21" height="23" fill="#191970" stroke="#9a9a9a" stroke-width="1"/>
<g transform="translate(280,845)" shape-rendering="auto">
<circle cx="11" cy="13" r="6.5" fill="none" stroke="#ffff00" stroke-width="1.2"/>
</g>
<rect x="303.5" y="821.5" width="45" height="47" fill="#191970" stroke="#9a9a9a" stroke-width="1"/>
<g transform="translate(303,821)" shape-rendering="auto">
<path d="M6,33 H39.5 L37,38 M6,33 L6,35 L9,38" fill="none" stroke="#ffff00" stroke-width="1.2"/>
<path d="M8.5,33 V24.5 H12.5 L14.5,33" fill="none" stroke="#ffff00" stroke-width="1.2"/>
<circle cx="22.5" cy="23" r="3.3" fill="none" stroke="#ffff00" stroke-width="1.2"/>
<path d="M21.5,26.5 V33 M23.5,26.5 V33 M34.5,16 V33" stroke="#ffff00" stroke-width="1.1"/>
<path d="M3,40 L5,38 L7,40 L9,38 L11,40 L13,38 L15,40 L17,38 L19,40 L21,38 L23,40 L25,38 L27,40 L29,38 L31,40 L33,38 L35,40 L37,38 L39,40 L41,38 V44 H3 Z" fill="#ffff00"/>
</g>
</svg>
</body></html>
